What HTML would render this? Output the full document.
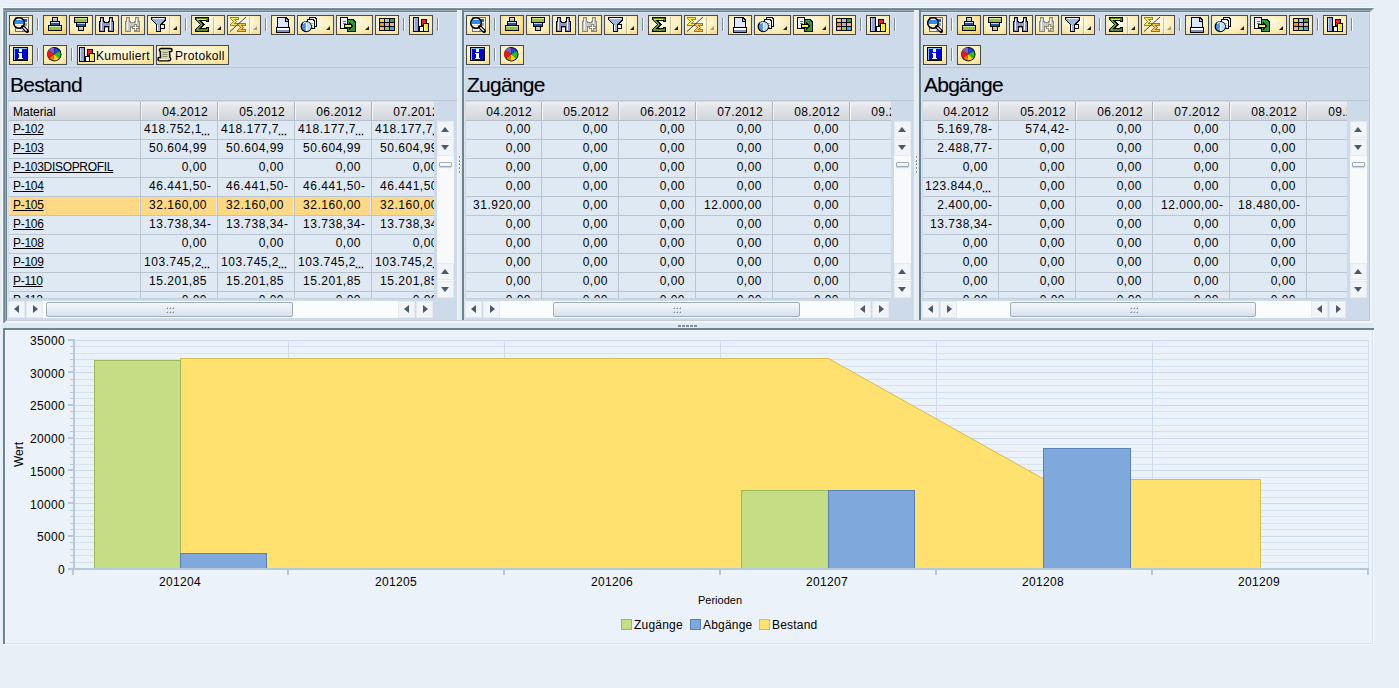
<!DOCTYPE html><html><head><meta charset="utf-8"><style>html,body{margin:0;padding:0}body{width:1399px;height:688px;position:relative;overflow:hidden;background:#e8eff7;font-family:"Liberation Sans",sans-serif}div{box-sizing:border-box}</style></head><body>
<div style="position:absolute;left:2px;top:7px;width:1372px;height:1px;background:#f6f9fc"></div>
<div style="position:absolute;left:2px;top:7px;width:1px;height:317px;background:#f6f9fc"></div>
<div style="position:absolute;left:1369px;top:8px;width:5px;height:314px;background:#e6edf3"></div>
<div style="position:absolute;left:3px;top:8px;width:1371px;height:316px;background:#6c8492;clip-path:polygon(0 0,1371px 0,1367px 4px,4px 4px,4px 312px,0 316px)"></div>
<div style="position:absolute;left:3px;top:10px;width:1368px;height:1px;background:#97a9b5"></div>
<div style="position:absolute;left:3px;top:8px;width:1370px;height:1px;background:#7c909d"></div>
<div style="position:absolute;left:5px;top:10px;width:1px;height:311px;background:#97a9b5"></div>
<div style="position:absolute;left:3px;top:9px;width:1px;height:314px;background:#8d9faa"></div>
<div style="position:absolute;left:7px;top:12px;width:450px;height:309px;background:#cddaea"></div>
<div style="position:absolute;left:7px;top:12px;width:450px;height:1px;background:#dce6f0"></div>
<div style="position:absolute;left:7px;top:12px;width:1px;height:309px;background:#d8e3ee"></div>
<div style="position:absolute;left:464px;top:12px;width:450px;height:309px;background:#cddaea"></div>
<div style="position:absolute;left:464px;top:12px;width:450px;height:1px;background:#dce6f0"></div>
<div style="position:absolute;left:464px;top:12px;width:1px;height:309px;background:#d8e3ee"></div>
<div style="position:absolute;left:921px;top:12px;width:448px;height:309px;background:#cddaea"></div>
<div style="position:absolute;left:921px;top:12px;width:448px;height:1px;background:#dce6f0"></div>
<div style="position:absolute;left:921px;top:12px;width:1px;height:309px;background:#d8e3ee"></div>
<div style="position:absolute;left:457px;top:10px;width:5px;height:312px;background:linear-gradient(90deg,#eef2f6,#dfe7ee)"></div>
<div style="position:absolute;left:462px;top:10px;width:2px;height:312px;background:#6c8492"></div>
<div style="position:absolute;left:459px;top:156px;width:1px;height:2px;background:#7d8d9c;box-shadow:1px 0 0 #fff,0 1px 0 #fff"></div>
<div style="position:absolute;left:459px;top:160px;width:1px;height:2px;background:#7d8d9c;box-shadow:1px 0 0 #fff,0 1px 0 #fff"></div>
<div style="position:absolute;left:459px;top:163px;width:1px;height:2px;background:#7d8d9c;box-shadow:1px 0 0 #fff,0 1px 0 #fff"></div>
<div style="position:absolute;left:459px;top:167px;width:1px;height:2px;background:#7d8d9c;box-shadow:1px 0 0 #fff,0 1px 0 #fff"></div>
<div style="position:absolute;left:459px;top:171px;width:1px;height:2px;background:#7d8d9c;box-shadow:1px 0 0 #fff,0 1px 0 #fff"></div>
<div style="position:absolute;left:914px;top:10px;width:5px;height:312px;background:linear-gradient(90deg,#eef2f6,#dfe7ee)"></div>
<div style="position:absolute;left:919px;top:10px;width:2px;height:312px;background:#6c8492"></div>
<div style="position:absolute;left:916px;top:156px;width:1px;height:2px;background:#7d8d9c;box-shadow:1px 0 0 #fff,0 1px 0 #fff"></div>
<div style="position:absolute;left:916px;top:160px;width:1px;height:2px;background:#7d8d9c;box-shadow:1px 0 0 #fff,0 1px 0 #fff"></div>
<div style="position:absolute;left:916px;top:163px;width:1px;height:2px;background:#7d8d9c;box-shadow:1px 0 0 #fff,0 1px 0 #fff"></div>
<div style="position:absolute;left:916px;top:167px;width:1px;height:2px;background:#7d8d9c;box-shadow:1px 0 0 #fff,0 1px 0 #fff"></div>
<div style="position:absolute;left:916px;top:171px;width:1px;height:2px;background:#7d8d9c;box-shadow:1px 0 0 #fff,0 1px 0 #fff"></div>
<div style="position:absolute;left:1369px;top:12px;width:1px;height:310px;background:#bcc8d3"></div>
<div style="position:absolute;left:1370px;top:12px;width:2px;height:310px;background:#eef3f7"></div>
<div style="position:absolute;left:7px;top:320px;width:1362px;height:1px;background:#c2cdd8"></div>
<div style="position:absolute;left:7px;top:321px;width:1365px;height:2px;background:#f2f6f9"></div>
<div style="position:absolute;left:2px;top:323px;width:1371px;height:5px;background:#e2eaf1"></div>
<div style="position:absolute;left:678px;top:325px;width:19px;height:2px;background:repeating-linear-gradient(90deg,#7f8f9f 0 3px,transparent 3px 4px)"></div>
<div style="position:absolute;left:3px;top:328px;width:1370px;height:316px;background:#ecf2f9"></div>
<div style="position:absolute;left:3px;top:328px;width:1371px;height:2px;background:#6c8492"></div>
<div style="position:absolute;left:3px;top:328px;width:2px;height:316px;background:#6c8492"></div>
<div style="position:absolute;left:5px;top:330px;width:1px;height:313px;background:#f6f9fc"></div>
<div style="position:absolute;left:5px;top:643px;width:1368px;height:1px;background:#d8e2ea"></div>
<div style="position:absolute;left:3px;top:644px;width:1371px;height:1px;background:#f4f7fa"></div>
<div style="position:absolute;left:1372px;top:330px;width:1px;height:314px;background:#d8e2ea"></div>
<div style="position:absolute;left:1373px;top:330px;width:1px;height:315px;background:#f4f7fa"></div>
<div style="position:absolute;left:9px;top:15px;width:24px;height:20px;box-sizing:border-box;border:1px solid #4a4a4a;border-radius:0;background:radial-gradient(ellipse 75% 70% at 45% 35%,#fffcec 0%,#fdf2c8 50%,#fce9aa 85%,#f9df90 100%)"><div style="position:absolute;left:3px;top:1px;width:17px;height:16px"><svg width="17" height="16" viewBox="0 0 17 16" style="position:absolute;left:0;top:0;overflow:visible" shape-rendering="crispEdges"><rect x="2" y="0" width="14" height="15" fill="#6e6e6e"/><rect x="3" y="1" width="12" height="13" fill="#f4f0e0"/><rect x="11" y="2" width="3" height="3" fill="#1f5fc0"/><rect x="11" y="6" width="3" height="3" fill="#8aa4c4"/><rect x="9" y="13" width="6" height="1" fill="#9a9ad8"/><g shape-rendering="auto"><circle cx="6" cy="6" r="5.3" fill="#fff8e0" stroke="#000" stroke-width="1.2"/><path d="M1.6 3 H10.6 V7 H1.6 Z" fill="#2a8cf2"/><path d="M2.5 8.5 H9.5" stroke="#f0d0f0" stroke-width="1"/><path d="M9.8 9.8 L14.2 14.2" stroke="#000" stroke-width="3.6" stroke-linecap="round"/><path d="M10.2 10.2 L13.8 13.8" stroke="#e8eef8" stroke-width="1.4"/></g><circle cx="6" cy="6" r="5.3" fill="none" stroke="#000" stroke-width="1.2" shape-rendering="auto"/></svg></div></div>
<div style="position:absolute;left:37px;top:18px;width:2px;height:13px;background:#ffffff;border-left:1px solid #7c8894;box-sizing:border-box"></div>
<div style="position:absolute;left:43px;top:15px;width:24px;height:20px;box-sizing:border-box;border:1px solid #4a4a4a;border-radius:0;background:radial-gradient(ellipse 75% 70% at 45% 35%,#fffae0 0%,#fde9a8 50%,#fcdb80 85%,#f9d068 100%)"><div style="position:absolute;left:3px;top:1px;width:17px;height:16px"><svg width="17" height="16" viewBox="0 0 17 16" style="position:absolute;left:0;top:0;overflow:visible" shape-rendering="crispEdges"><rect x="1" y="8" width="14" height="6" fill="#000"/><rect x="2" y="9" width="12" height="4" fill="#98c048"/><rect x="2" y="9" width="12" height="1" fill="#d4ec98"/><rect x="3" y="4" width="10" height="5" fill="#000"/><rect x="4" y="5" width="8" height="3" fill="#1a58a8"/><rect x="4" y="5" width="8" height="1" fill="#d0e0f4"/><rect x="5" y="0" width="6" height="5" fill="#000"/><rect x="6" y="1" width="4" height="3" fill="#c4c494"/><rect x="6" y="1" width="4" height="1" fill="#e0e0b8"/></svg></div></div>
<div style="position:absolute;left:69px;top:15px;width:24px;height:20px;box-sizing:border-box;border:1px solid #4a4a4a;border-radius:0;background:radial-gradient(ellipse 75% 70% at 45% 35%,#fffcec 0%,#fdf2c8 50%,#fce9aa 85%,#f9df90 100%)"><div style="position:absolute;left:3px;top:1px;width:17px;height:16px"><svg width="17" height="16" viewBox="0 0 17 16" style="position:absolute;left:0;top:0;overflow:visible" shape-rendering="crispEdges"><rect x="5" y="9" width="6" height="5" fill="#000"/><rect x="6" y="10" width="4" height="3" fill="#c4c494"/><rect x="6" y="10" width="4" height="1" fill="#e0e0b8"/><rect x="3" y="5" width="10" height="5" fill="#000"/><rect x="4" y="6" width="8" height="3" fill="#1a58a8"/><rect x="4" y="6" width="8" height="1" fill="#f4c0c0"/><rect x="1" y="0" width="14" height="6" fill="#000"/><rect x="2" y="1" width="12" height="4" fill="#98c048"/><rect x="2" y="1" width="12" height="1" fill="#d4ec98"/></svg></div></div>
<div style="position:absolute;left:95px;top:15px;width:24px;height:20px;box-sizing:border-box;border:1px solid #4a4a4a;border-radius:0;background:radial-gradient(ellipse 75% 70% at 45% 35%,#fffcec 0%,#fdf2c8 50%,#fce9aa 85%,#f9df90 100%)"><div style="position:absolute;left:3px;top:1px;width:17px;height:16px"><svg width="17" height="16" viewBox="0 0 17 16" style="position:absolute;left:0;top:0;overflow:visible" shape-rendering="crispEdges"><path d="M1 0 H5 V4 H6 V5 H9 V4 H10 V0 H14 V4 H15 V15 H9 V11 H6 V15 H0 V4 H1 Z" fill="#000"/><path d="M2 1 H4 V5 H5 V6 H10 V5 H11 V1 H13 V5 H14 V14 H10 V9 H5 V14 H1 V5 H2 Z" fill="#8c94d4"/><rect x="2" y="2" width="1" height="11" fill="#f4f4ff"/><rect x="11" y="2" width="1" height="11" fill="#f4f4ff"/><rect x="6" y="10" width="3" height="1" fill="#8c94d4"/></svg></div></div>
<div style="position:absolute;left:121px;top:15px;width:24px;height:20px;box-sizing:border-box;border:1px solid #4a4a4a;border-radius:0;background:radial-gradient(ellipse 75% 70% at 45% 35%,#fffcec 0%,#fdf2c8 50%,#fce9aa 85%,#f9df90 100%)"><div style="position:absolute;left:3px;top:1px;width:17px;height:16px"><svg width="17" height="16" viewBox="0 0 17 16" style="position:absolute;left:0;top:0;overflow:visible" shape-rendering="crispEdges"><path d="M1 0 H5 V4 H6 V5 H9 V4 H10 V0 H14 V4 H15 V15 H9 V11 H6 V15 H0 V4 H1 Z" fill="#8c8a78"/><path d="M2 1 H4 V5 H5 V6 H10 V5 H11 V1 H13 V5 H14 V14 H10 V9 H5 V14 H1 V5 H2 Z" fill="#c8c8c8"/><rect x="2" y="2" width="1" height="11" fill="#f4f4f4"/><rect x="11" y="2" width="1" height="11" fill="#f4f4f4"/><rect x="6" y="10" width="3" height="1" fill="#c8c8c8"/><path d="M9 7 H12 V9 H14 V12 H12 V14 H9 V12 H7 V9 H9 Z" fill="#8c8a78"/><path d="M10 8 H11 V10 H13 V11 H11 V13 H10 V11 H8 V10 H10 Z" fill="#fffef0"/></svg></div></div>
<div style="position:absolute;left:147px;top:15px;width:34px;height:20px;box-sizing:border-box;border:1px solid #4a4a4a;border-radius:0;background:radial-gradient(ellipse 75% 70% at 45% 35%,#fffcec 0%,#fdf2c8 50%,#fce9aa 85%,#f9df90 100%)"><div style="position:absolute;left:3px;top:1px;width:17px;height:16px"><svg width="17" height="16" viewBox="0 0 17 16" style="position:absolute;left:0;top:0;overflow:visible" shape-rendering="crispEdges"><path d="M0 0 H15 V3 L10 8 V15 H5 V8 L0 3 Z" fill="#000"/><path d="M1 1 H14 V2.6 L9 7.6 V14 H6 V7.6 L1 2.6 Z" fill="#9cb6dc"/><path d="M2 1.5 H13 M6.5 8 V13.5" stroke="#f4f8ff" stroke-width="1"/><rect x="9" y="7" width="5" height="5" fill="#000"/><rect x="10" y="8" width="3" height="3" fill="#fff6c8"/></svg></div><div style="position:absolute;left:21px;top:1px;width:1px;height:17px;background:#cfc296;box-shadow:1px 0 0 #fffbea"></div><div style="position:absolute;left:25px;top:10px;width:0;height:0;border-left:4px solid transparent;border-bottom:4px solid #1a1a30"></div></div>
<div style="position:absolute;left:185px;top:18px;width:2px;height:13px;background:#ffffff;border-left:1px solid #7c8894;box-sizing:border-box"></div>
<div style="position:absolute;left:191px;top:15px;width:34px;height:20px;box-sizing:border-box;border:1px solid #4a4a4a;border-radius:0;background:radial-gradient(ellipse 75% 70% at 45% 35%,#fffcec 0%,#fdf2c8 50%,#fce9aa 85%,#f9df90 100%)"><div style="position:absolute;left:3px;top:1px;width:17px;height:16px"><svg width="17" height="16" viewBox="0 0 17 16" style="position:absolute;left:0;top:0;overflow:visible" shape-rendering="crispEdges"><path d="M0 0 H14 V5 H11 V4 H6 L9.5 7.5 L6 11 H11 V10 H14 V15 H0 V12 L4.5 7.5 L0 3 Z" fill="#000"/><path d="M1.2 1.2 H12.8 V3.8 H11.8 V2.8 H3.2 L7.8 7.5 L3.2 12.2 H11.8 V11.2 H12.8 V13.8 H1.2 V12.4 L6 7.5 L1.2 2.6 Z" fill="#7cbc1c" shape-rendering="auto"/><path d="M2 2 H11" stroke="#c8f080" stroke-width="1"/></svg></div><div style="position:absolute;left:21px;top:1px;width:1px;height:17px;background:#cfc296;box-shadow:1px 0 0 #fffbea"></div><div style="position:absolute;left:25px;top:10px;width:0;height:0;border-left:4px solid transparent;border-bottom:4px solid #1a1a30"></div></div>
<div style="position:absolute;left:227px;top:15px;width:34px;height:20px;box-sizing:border-box;border:1px solid #4a4a4a;border-radius:0;background:radial-gradient(ellipse 75% 70% at 45% 35%,#fffcec 0%,#fdf2c8 50%,#fce9aa 85%,#f9df90 100%)"><div style="position:absolute;left:3px;top:1px;width:17px;height:16px"><svg width="17" height="16" viewBox="0 0 17 16" style="position:absolute;left:0;top:0;overflow:visible" shape-rendering="crispEdges"><g transform="translate(-1,0)"><path d="M0 0 H9 V3 H5 L7 4.5 L5 6 H9 V9 H0 V7 L2.5 4.5 L0 2 Z" fill="#8c8450"/><path d="M1 1 H8 V2 H3 L5.5 4.5 L3 7 H8 V8 H1 V7.4 L3.6 4.5 L1 1.6 Z" fill="#f4ec48"/><rect x="1" y="1" width="4" height="1" fill="#f4ec48"/><rect x="1" y="7" width="4" height="1" fill="#f4ec48"/></g><g transform="translate(6,6)"><path d="M0 0 H9 V3 H5 L7 4.5 L5 6 H9 V9 H0 V7 L2.5 4.5 L0 2 Z" fill="#8c7450"/><path d="M1 1 H8 V2 H3 L5.5 4.5 L3 7 H8 V8 H1 V7.4 L3.6 4.5 L1 1.6 Z" fill="#f6c050"/><rect x="1" y="1" width="4" height="1" fill="#f6c050"/><rect x="1" y="7" width="4" height="1" fill="#f6c050"/></g><path d="M-1 14.5 L15 0" stroke="#404040" stroke-width="1" shape-rendering="auto"/></svg></div><div style="position:absolute;left:21px;top:1px;width:1px;height:17px;background:#cfc296;box-shadow:1px 0 0 #fffbea"></div><div style="position:absolute;left:25px;top:10px;width:0;height:0;border-left:4px solid transparent;border-bottom:4px solid #9a9a9a"></div></div>
<div style="position:absolute;left:265px;top:18px;width:2px;height:13px;background:#ffffff;border-left:1px solid #7c8894;box-sizing:border-box"></div>
<div style="position:absolute;left:271px;top:15px;width:24px;height:20px;box-sizing:border-box;border:1px solid #4a4a4a;border-radius:0;background:radial-gradient(ellipse 75% 70% at 45% 35%,#fffcec 0%,#fdf2c8 50%,#fce9aa 85%,#f9df90 100%)"><div style="position:absolute;left:3px;top:1px;width:17px;height:16px"><svg width="17" height="16" viewBox="0 0 17 16" style="position:absolute;left:0;top:0;overflow:visible" shape-rendering="crispEdges"><path d="M2 0 H11 L14 3 V11 H2 Z" fill="#000"/><path d="M3 1 H10 L13 4 V10 H3 Z" fill="#dce8f8"/><path d="M10 1 V4 H13" fill="#a8c8e8" stroke="#000" stroke-width="1"/><rect x="1" y="10" width="14" height="6" fill="#000"/><rect x="2" y="11" width="12" height="2" fill="#ffffff"/><rect x="2" y="13" width="12" height="2" fill="#8090b8"/></svg></div></div>
<div style="position:absolute;left:297px;top:15px;width:37px;height:20px;box-sizing:border-box;border:1px solid #4a4a4a;border-radius:0;background:radial-gradient(ellipse 75% 70% at 45% 35%,#fffcec 0%,#fdf2c8 50%,#fce9aa 85%,#f9df90 100%)"><div style="position:absolute;left:3px;top:1px;width:17px;height:16px"><svg width="17" height="16" viewBox="0 0 17 16" style="position:absolute;left:0;top:0;overflow:visible" shape-rendering="crispEdges"><path d="M8 0 H14 L16 2 V10 H8 Z" fill="#000"/><path d="M9 1 H13 L15 3 V9 H9 Z" fill="#f4f4f8"/><path d="M6 2 H12 L14 4 V12 H6 Z" fill="#000"/><path d="M7 3 H11 L13 5 V11 H7 Z" fill="#fff"/><path d="M8 6 H12 M8 8 H12 M8 10 H12" stroke="#90a0b8" stroke-width="1"/><g shape-rendering="auto"><circle cx="5.2" cy="9.6" r="5" fill="#4a90ee" stroke="#000" stroke-width="1.3"/><path d="M5.5 5 A4.6 4.6 0 0 1 5.5 14.2 Z" fill="#b8dcfa"/><path d="M2 7 A4 4 0 0 1 5 5.2" stroke="#c0e0ff" stroke-width="1.2" fill="none"/><path d="M5.5 5.5 V14" stroke="#fff" stroke-width="1.2"/></g></svg></div><div style="position:absolute;left:28px;top:10px;width:0;height:0;border-left:4px solid transparent;border-bottom:4px solid #1a1a30"></div></div>
<div style="position:absolute;left:336px;top:15px;width:37px;height:20px;box-sizing:border-box;border:1px solid #4a4a4a;border-radius:0;background:radial-gradient(ellipse 75% 70% at 45% 35%,#fffcec 0%,#fdf2c8 50%,#fce9aa 85%,#f9df90 100%)"><div style="position:absolute;left:3px;top:1px;width:17px;height:16px"><svg width="17" height="16" viewBox="0 0 17 16" style="position:absolute;left:0;top:0;overflow:visible" shape-rendering="crispEdges"><path d="M0 0 H8 V12 H0 Z" fill="#000"/><rect x="1" y="1" width="6" height="10" fill="#e8f0fc"/><path d="M3 4 H6 M3 6 H6" stroke="#5878a8" stroke-width="1"/><path d="M7 2 H13 L16 5 V15 H7 Z" fill="#000"/><path d="M8 3 H12 L15 6 V14 H8 Z" fill="#2c9a2c"/><path d="M4 7 H9 V5 L13 9 L9 13 V11 H4 Z" fill="#000"/><path d="M5 8 H10 V7 L11.8 9 L10 11 V10 H5 Z" fill="#fff020"/></svg></div><div style="position:absolute;left:28px;top:10px;width:0;height:0;border-left:4px solid transparent;border-bottom:4px solid #1a1a30"></div></div>
<div style="position:absolute;left:375px;top:15px;width:24px;height:20px;box-sizing:border-box;border:1px solid #4a4a4a;border-radius:0;background:radial-gradient(ellipse 75% 70% at 45% 35%,#fffcec 0%,#fdf2c8 50%,#fce9aa 85%,#f9df90 100%)"><div style="position:absolute;left:3px;top:1px;width:17px;height:16px"><svg width="17" height="16" viewBox="0 0 17 16" style="position:absolute;left:0;top:0;overflow:visible" shape-rendering="crispEdges"><rect x="0" y="1" width="16" height="13" fill="#000"/><rect x="1" y="2" width="4" height="3" fill="#f4d820"/><rect x="6" y="2" width="4" height="3" fill="#a8c0f0"/><rect x="11" y="2" width="4" height="3" fill="#40a030"/><rect x="1" y="6" width="4" height="3" fill="#f89010"/><rect x="6" y="6" width="4" height="3" fill="#c0a0e0"/><rect x="11" y="6" width="4" height="3" fill="#e0b888"/><rect x="1" y="10" width="4" height="3" fill="#f8a8b0"/><rect x="6" y="10" width="4" height="3" fill="#98d030"/><rect x="11" y="10" width="4" height="3" fill="#40a8f8"/></svg></div></div>
<div style="position:absolute;left:403px;top:18px;width:2px;height:13px;background:#ffffff;border-left:1px solid #7c8894;box-sizing:border-box"></div>
<div style="position:absolute;left:409px;top:15px;width:24px;height:20px;box-sizing:border-box;border:1px solid #4a4a4a;border-radius:0;background:radial-gradient(ellipse 75% 70% at 45% 35%,#fffcec 0%,#fdf2c8 50%,#fce9aa 85%,#f9df90 100%)"><div style="position:absolute;left:3px;top:1px;width:17px;height:16px"><svg width="17" height="16" viewBox="0 0 17 16" style="position:absolute;left:0;top:0;overflow:visible" shape-rendering="crispEdges"><g transform="translate(0,0)"><rect x="0" y="0" width="6" height="15" fill="#000"/><rect x="1" y="1" width="4" height="13" fill="#8ea4dc"/><rect x="1" y="1" width="1" height="13" fill="#c8d8f8"/><rect x="8" y="2" width="6" height="7" fill="#000"/><rect x="9" y="3" width="4" height="5" fill="#f02020"/><rect x="6" y="9" width="5" height="6" fill="#000"/><rect x="7" y="10" width="3" height="4" fill="#f8fcff"/><rect x="10" y="6" width="6" height="9" fill="#000"/><rect x="11" y="7" width="4" height="7" fill="#f8ec00"/><rect x="11" y="7" width="1" height="7" fill="#ffffa0"/></g></svg></div></div>
<div style="position:absolute;left:437px;top:18px;width:2px;height:13px;background:#ffffff;border-left:1px solid #7c8894;box-sizing:border-box"></div>
<div style="position:absolute;left:9px;top:45px;width:24px;height:20px;box-sizing:border-box;border:1px solid #4a4a4a;border-radius:0;background:radial-gradient(ellipse 75% 70% at 45% 35%,#fffcec 0%,#fdf2c8 50%,#fce9aa 85%,#f9df90 100%)"><div style="position:absolute;left:3px;top:1px;width:17px;height:16px"><svg width="17" height="16" viewBox="0 0 17 16" style="position:absolute;left:0;top:0;overflow:visible" shape-rendering="crispEdges"><rect x="0" y="0" width="15" height="14" fill="#000"/><rect x="1" y="1" width="13" height="12" fill="#0008d8"/><rect x="1" y="1" width="13" height="1" fill="#80c0ff"/><rect x="1" y="1" width="1" height="12" fill="#80c0ff"/><rect x="6" y="2" width="3" height="3" fill="#fff"/><path d="M5 6 H9 V11 H10 V12 H5 V11 H6 V7 H5 Z" fill="#fff"/></svg></div></div>
<div style="position:absolute;left:37px;top:48px;width:2px;height:13px;background:#ffffff;border-left:1px solid #7c8894;box-sizing:border-box"></div>
<div style="position:absolute;left:43px;top:45px;width:24px;height:20px;box-sizing:border-box;border:1px solid #4a4a4a;border-radius:0;background:radial-gradient(ellipse 75% 70% at 45% 35%,#fffcec 0%,#fdf2c8 50%,#fce9aa 85%,#f9df90 100%)"><div style="position:absolute;left:3px;top:1px;width:17px;height:16px"><svg width="17" height="16" viewBox="0 0 17 16" style="position:absolute;left:0;top:0;overflow:visible" shape-rendering="crispEdges"><g shape-rendering="auto"><circle cx="7.3" cy="7.2" r="7.2" fill="#000"/><path d="M7.3 7.2 L1.3 3.2 A6.2 6.2 0 0 1 7.3 1 Z" fill="#8060c0"/><path d="M7.3 7.2 L7.3 1 A6.2 6.2 0 0 1 12.6 4 Z" fill="#2040f0"/><path d="M7.3 7.2 L12.6 4 A6.2 6.2 0 0 1 12 11.4 Z" fill="#20c020"/><path d="M7.3 7.2 L12 11.4 A6.2 6.2 0 0 1 6 13.3 Z" fill="#f8d800"/><path d="M7.3 7.2 L6 13.3 A6.2 6.2 0 0 1 2 11 Z" fill="#f07010"/><path d="M7.3 7.2 L2 11 A6.2 6.2 0 0 1 1.3 3.2 Z" fill="#e81818"/></g></svg></div></div>
<div style="position:absolute;left:71px;top:48px;width:2px;height:13px;background:#ffffff;border-left:1px solid #7c8894;box-sizing:border-box"></div>
<div style="position:absolute;left:77px;top:45px;width:77px;height:20px;box-sizing:border-box;border:1px solid #4a4a4a;border-radius:0;background:radial-gradient(ellipse 75% 70% at 45% 35%,#fffcec 0%,#fdf2c8 50%,#fce9aa 85%,#f9df90 100%)"><div style="position:absolute;left:1px;top:1px;width:17px;height:16px"><svg width="17" height="16" viewBox="0 0 17 16" style="position:absolute;left:0;top:0;overflow:visible" shape-rendering="crispEdges"><g transform="translate(0,0)"><rect x="0" y="0" width="6" height="15" fill="#000"/><rect x="1" y="1" width="4" height="13" fill="#8ea4dc"/><rect x="1" y="1" width="1" height="13" fill="#c8d8f8"/><rect x="8" y="2" width="6" height="7" fill="#000"/><rect x="9" y="3" width="4" height="5" fill="#f02020"/><rect x="6" y="9" width="5" height="6" fill="#000"/><rect x="7" y="10" width="3" height="4" fill="#f8fcff"/><rect x="10" y="6" width="6" height="9" fill="#000"/><rect x="11" y="7" width="4" height="7" fill="#f8ec00"/><rect x="11" y="7" width="1" height="7" fill="#ffffa0"/></g></svg></div><div style="position:absolute;left:18px;top:2px;font:12px 'Liberation Sans', sans-serif;line-height:16px;letter-spacing:0.35px;color:#000;white-space:nowrap">Kumuliert</div></div>
<div style="position:absolute;left:156px;top:45px;width:73px;height:20px;box-sizing:border-box;border:1px solid #4a4a4a;border-radius:0;background:radial-gradient(ellipse 75% 70% at 45% 35%,#fffcec 0%,#fdf2c8 50%,#fce9aa 85%,#f9df90 100%)"><div style="position:absolute;left:1px;top:1px;width:17px;height:16px"><svg width="17" height="16" viewBox="0 0 17 16" style="position:absolute;left:0;top:0;overflow:visible" shape-rendering="crispEdges"><g shape-rendering="auto"><path d="M3 1.5 H12.5 A1.6 1.6 0 0 1 12.5 4.7 H11.5 L12 10.5 A1.8 1.8 0 0 1 10.5 13.7 H1.5 A1.6 1.6 0 0 1 1.5 10.5 H2.5 L2.2 4.5 A1.6 1.6 0 0 1 3 1.5 Z" fill="#d4d6b0" stroke="#000" stroke-width="1.4"/><path d="M4.5 5.5 H9.5 M4.5 7.5 H9.5 M4.5 9.5 H9.5" stroke="#8c8c60" stroke-width="1"/><path d="M1 12.8 H10" stroke="#fff" stroke-width="0.8"/></g></svg></div><div style="position:absolute;left:18px;top:2px;font:12px 'Liberation Sans', sans-serif;line-height:16px;letter-spacing:0.35px;color:#000;white-space:nowrap">Protokoll</div></div>
<div style="position:absolute;left:8px;top:65px;width:449px;height:1px;background:#d3e1ee"></div>
<div style="position:absolute;left:8px;top:67px;width:449px;height:1px;background:#b9c5d0"></div>
<div style="position:absolute;left:10px;top:73px;font:21px 'Liberation Sans', sans-serif;letter-spacing:-0.75px;-webkit-text-stroke:0.12px #000;color:#000;white-space:nowrap">Bestand</div>
<div style="position:absolute;left:8px;top:100px;width:449px;height:1px;background:#b9c5d0"></div>
<div style="position:absolute;left:466px;top:15px;width:24px;height:20px;box-sizing:border-box;border:1px solid #4a4a4a;border-radius:0;background:radial-gradient(ellipse 75% 70% at 45% 35%,#fffcec 0%,#fdf2c8 50%,#fce9aa 85%,#f9df90 100%)"><div style="position:absolute;left:3px;top:1px;width:17px;height:16px"><svg width="17" height="16" viewBox="0 0 17 16" style="position:absolute;left:0;top:0;overflow:visible" shape-rendering="crispEdges"><rect x="2" y="0" width="14" height="15" fill="#6e6e6e"/><rect x="3" y="1" width="12" height="13" fill="#f4f0e0"/><rect x="11" y="2" width="3" height="3" fill="#1f5fc0"/><rect x="11" y="6" width="3" height="3" fill="#8aa4c4"/><rect x="9" y="13" width="6" height="1" fill="#9a9ad8"/><g shape-rendering="auto"><circle cx="6" cy="6" r="5.3" fill="#fff8e0" stroke="#000" stroke-width="1.2"/><path d="M1.6 3 H10.6 V7 H1.6 Z" fill="#2a8cf2"/><path d="M2.5 8.5 H9.5" stroke="#f0d0f0" stroke-width="1"/><path d="M9.8 9.8 L14.2 14.2" stroke="#000" stroke-width="3.6" stroke-linecap="round"/><path d="M10.2 10.2 L13.8 13.8" stroke="#e8eef8" stroke-width="1.4"/></g><circle cx="6" cy="6" r="5.3" fill="none" stroke="#000" stroke-width="1.2" shape-rendering="auto"/></svg></div></div>
<div style="position:absolute;left:494px;top:18px;width:2px;height:13px;background:#ffffff;border-left:1px solid #7c8894;box-sizing:border-box"></div>
<div style="position:absolute;left:500px;top:15px;width:24px;height:20px;box-sizing:border-box;border:1px solid #4a4a4a;border-radius:0;background:radial-gradient(ellipse 75% 70% at 45% 35%,#fffae0 0%,#fde9a8 50%,#fcdb80 85%,#f9d068 100%)"><div style="position:absolute;left:3px;top:1px;width:17px;height:16px"><svg width="17" height="16" viewBox="0 0 17 16" style="position:absolute;left:0;top:0;overflow:visible" shape-rendering="crispEdges"><rect x="1" y="8" width="14" height="6" fill="#000"/><rect x="2" y="9" width="12" height="4" fill="#98c048"/><rect x="2" y="9" width="12" height="1" fill="#d4ec98"/><rect x="3" y="4" width="10" height="5" fill="#000"/><rect x="4" y="5" width="8" height="3" fill="#1a58a8"/><rect x="4" y="5" width="8" height="1" fill="#d0e0f4"/><rect x="5" y="0" width="6" height="5" fill="#000"/><rect x="6" y="1" width="4" height="3" fill="#c4c494"/><rect x="6" y="1" width="4" height="1" fill="#e0e0b8"/></svg></div></div>
<div style="position:absolute;left:526px;top:15px;width:24px;height:20px;box-sizing:border-box;border:1px solid #4a4a4a;border-radius:0;background:radial-gradient(ellipse 75% 70% at 45% 35%,#fffcec 0%,#fdf2c8 50%,#fce9aa 85%,#f9df90 100%)"><div style="position:absolute;left:3px;top:1px;width:17px;height:16px"><svg width="17" height="16" viewBox="0 0 17 16" style="position:absolute;left:0;top:0;overflow:visible" shape-rendering="crispEdges"><rect x="5" y="9" width="6" height="5" fill="#000"/><rect x="6" y="10" width="4" height="3" fill="#c4c494"/><rect x="6" y="10" width="4" height="1" fill="#e0e0b8"/><rect x="3" y="5" width="10" height="5" fill="#000"/><rect x="4" y="6" width="8" height="3" fill="#1a58a8"/><rect x="4" y="6" width="8" height="1" fill="#f4c0c0"/><rect x="1" y="0" width="14" height="6" fill="#000"/><rect x="2" y="1" width="12" height="4" fill="#98c048"/><rect x="2" y="1" width="12" height="1" fill="#d4ec98"/></svg></div></div>
<div style="position:absolute;left:552px;top:15px;width:24px;height:20px;box-sizing:border-box;border:1px solid #4a4a4a;border-radius:0;background:radial-gradient(ellipse 75% 70% at 45% 35%,#fffcec 0%,#fdf2c8 50%,#fce9aa 85%,#f9df90 100%)"><div style="position:absolute;left:3px;top:1px;width:17px;height:16px"><svg width="17" height="16" viewBox="0 0 17 16" style="position:absolute;left:0;top:0;overflow:visible" shape-rendering="crispEdges"><path d="M1 0 H5 V4 H6 V5 H9 V4 H10 V0 H14 V4 H15 V15 H9 V11 H6 V15 H0 V4 H1 Z" fill="#000"/><path d="M2 1 H4 V5 H5 V6 H10 V5 H11 V1 H13 V5 H14 V14 H10 V9 H5 V14 H1 V5 H2 Z" fill="#8c94d4"/><rect x="2" y="2" width="1" height="11" fill="#f4f4ff"/><rect x="11" y="2" width="1" height="11" fill="#f4f4ff"/><rect x="6" y="10" width="3" height="1" fill="#8c94d4"/></svg></div></div>
<div style="position:absolute;left:578px;top:15px;width:24px;height:20px;box-sizing:border-box;border:1px solid #4a4a4a;border-radius:0;background:radial-gradient(ellipse 75% 70% at 45% 35%,#fffcec 0%,#fdf2c8 50%,#fce9aa 85%,#f9df90 100%)"><div style="position:absolute;left:3px;top:1px;width:17px;height:16px"><svg width="17" height="16" viewBox="0 0 17 16" style="position:absolute;left:0;top:0;overflow:visible" shape-rendering="crispEdges"><path d="M1 0 H5 V4 H6 V5 H9 V4 H10 V0 H14 V4 H15 V15 H9 V11 H6 V15 H0 V4 H1 Z" fill="#8c8a78"/><path d="M2 1 H4 V5 H5 V6 H10 V5 H11 V1 H13 V5 H14 V14 H10 V9 H5 V14 H1 V5 H2 Z" fill="#c8c8c8"/><rect x="2" y="2" width="1" height="11" fill="#f4f4f4"/><rect x="11" y="2" width="1" height="11" fill="#f4f4f4"/><rect x="6" y="10" width="3" height="1" fill="#c8c8c8"/><path d="M9 7 H12 V9 H14 V12 H12 V14 H9 V12 H7 V9 H9 Z" fill="#8c8a78"/><path d="M10 8 H11 V10 H13 V11 H11 V13 H10 V11 H8 V10 H10 Z" fill="#fffef0"/></svg></div></div>
<div style="position:absolute;left:604px;top:15px;width:34px;height:20px;box-sizing:border-box;border:1px solid #4a4a4a;border-radius:0;background:radial-gradient(ellipse 75% 70% at 45% 35%,#fffcec 0%,#fdf2c8 50%,#fce9aa 85%,#f9df90 100%)"><div style="position:absolute;left:3px;top:1px;width:17px;height:16px"><svg width="17" height="16" viewBox="0 0 17 16" style="position:absolute;left:0;top:0;overflow:visible" shape-rendering="crispEdges"><path d="M0 0 H15 V3 L10 8 V15 H5 V8 L0 3 Z" fill="#000"/><path d="M1 1 H14 V2.6 L9 7.6 V14 H6 V7.6 L1 2.6 Z" fill="#9cb6dc"/><path d="M2 1.5 H13 M6.5 8 V13.5" stroke="#f4f8ff" stroke-width="1"/><rect x="9" y="7" width="5" height="5" fill="#000"/><rect x="10" y="8" width="3" height="3" fill="#fff6c8"/></svg></div><div style="position:absolute;left:21px;top:1px;width:1px;height:17px;background:#cfc296;box-shadow:1px 0 0 #fffbea"></div><div style="position:absolute;left:25px;top:10px;width:0;height:0;border-left:4px solid transparent;border-bottom:4px solid #1a1a30"></div></div>
<div style="position:absolute;left:642px;top:18px;width:2px;height:13px;background:#ffffff;border-left:1px solid #7c8894;box-sizing:border-box"></div>
<div style="position:absolute;left:648px;top:15px;width:34px;height:20px;box-sizing:border-box;border:1px solid #4a4a4a;border-radius:0;background:radial-gradient(ellipse 75% 70% at 45% 35%,#fffcec 0%,#fdf2c8 50%,#fce9aa 85%,#f9df90 100%)"><div style="position:absolute;left:3px;top:1px;width:17px;height:16px"><svg width="17" height="16" viewBox="0 0 17 16" style="position:absolute;left:0;top:0;overflow:visible" shape-rendering="crispEdges"><path d="M0 0 H14 V5 H11 V4 H6 L9.5 7.5 L6 11 H11 V10 H14 V15 H0 V12 L4.5 7.5 L0 3 Z" fill="#000"/><path d="M1.2 1.2 H12.8 V3.8 H11.8 V2.8 H3.2 L7.8 7.5 L3.2 12.2 H11.8 V11.2 H12.8 V13.8 H1.2 V12.4 L6 7.5 L1.2 2.6 Z" fill="#7cbc1c" shape-rendering="auto"/><path d="M2 2 H11" stroke="#c8f080" stroke-width="1"/></svg></div><div style="position:absolute;left:21px;top:1px;width:1px;height:17px;background:#cfc296;box-shadow:1px 0 0 #fffbea"></div><div style="position:absolute;left:25px;top:10px;width:0;height:0;border-left:4px solid transparent;border-bottom:4px solid #1a1a30"></div></div>
<div style="position:absolute;left:684px;top:15px;width:34px;height:20px;box-sizing:border-box;border:1px solid #4a4a4a;border-radius:0;background:radial-gradient(ellipse 75% 70% at 45% 35%,#fffcec 0%,#fdf2c8 50%,#fce9aa 85%,#f9df90 100%)"><div style="position:absolute;left:3px;top:1px;width:17px;height:16px"><svg width="17" height="16" viewBox="0 0 17 16" style="position:absolute;left:0;top:0;overflow:visible" shape-rendering="crispEdges"><g transform="translate(-1,0)"><path d="M0 0 H9 V3 H5 L7 4.5 L5 6 H9 V9 H0 V7 L2.5 4.5 L0 2 Z" fill="#8c8450"/><path d="M1 1 H8 V2 H3 L5.5 4.5 L3 7 H8 V8 H1 V7.4 L3.6 4.5 L1 1.6 Z" fill="#f4ec48"/><rect x="1" y="1" width="4" height="1" fill="#f4ec48"/><rect x="1" y="7" width="4" height="1" fill="#f4ec48"/></g><g transform="translate(6,6)"><path d="M0 0 H9 V3 H5 L7 4.5 L5 6 H9 V9 H0 V7 L2.5 4.5 L0 2 Z" fill="#8c7450"/><path d="M1 1 H8 V2 H3 L5.5 4.5 L3 7 H8 V8 H1 V7.4 L3.6 4.5 L1 1.6 Z" fill="#f6c050"/><rect x="1" y="1" width="4" height="1" fill="#f6c050"/><rect x="1" y="7" width="4" height="1" fill="#f6c050"/></g><path d="M-1 14.5 L15 0" stroke="#404040" stroke-width="1" shape-rendering="auto"/></svg></div><div style="position:absolute;left:21px;top:1px;width:1px;height:17px;background:#cfc296;box-shadow:1px 0 0 #fffbea"></div><div style="position:absolute;left:25px;top:10px;width:0;height:0;border-left:4px solid transparent;border-bottom:4px solid #9a9a9a"></div></div>
<div style="position:absolute;left:722px;top:18px;width:2px;height:13px;background:#ffffff;border-left:1px solid #7c8894;box-sizing:border-box"></div>
<div style="position:absolute;left:728px;top:15px;width:24px;height:20px;box-sizing:border-box;border:1px solid #4a4a4a;border-radius:0;background:radial-gradient(ellipse 75% 70% at 45% 35%,#fffcec 0%,#fdf2c8 50%,#fce9aa 85%,#f9df90 100%)"><div style="position:absolute;left:3px;top:1px;width:17px;height:16px"><svg width="17" height="16" viewBox="0 0 17 16" style="position:absolute;left:0;top:0;overflow:visible" shape-rendering="crispEdges"><path d="M2 0 H11 L14 3 V11 H2 Z" fill="#000"/><path d="M3 1 H10 L13 4 V10 H3 Z" fill="#dce8f8"/><path d="M10 1 V4 H13" fill="#a8c8e8" stroke="#000" stroke-width="1"/><rect x="1" y="10" width="14" height="6" fill="#000"/><rect x="2" y="11" width="12" height="2" fill="#ffffff"/><rect x="2" y="13" width="12" height="2" fill="#8090b8"/></svg></div></div>
<div style="position:absolute;left:754px;top:15px;width:37px;height:20px;box-sizing:border-box;border:1px solid #4a4a4a;border-radius:0;background:radial-gradient(ellipse 75% 70% at 45% 35%,#fffcec 0%,#fdf2c8 50%,#fce9aa 85%,#f9df90 100%)"><div style="position:absolute;left:3px;top:1px;width:17px;height:16px"><svg width="17" height="16" viewBox="0 0 17 16" style="position:absolute;left:0;top:0;overflow:visible" shape-rendering="crispEdges"><path d="M8 0 H14 L16 2 V10 H8 Z" fill="#000"/><path d="M9 1 H13 L15 3 V9 H9 Z" fill="#f4f4f8"/><path d="M6 2 H12 L14 4 V12 H6 Z" fill="#000"/><path d="M7 3 H11 L13 5 V11 H7 Z" fill="#fff"/><path d="M8 6 H12 M8 8 H12 M8 10 H12" stroke="#90a0b8" stroke-width="1"/><g shape-rendering="auto"><circle cx="5.2" cy="9.6" r="5" fill="#4a90ee" stroke="#000" stroke-width="1.3"/><path d="M5.5 5 A4.6 4.6 0 0 1 5.5 14.2 Z" fill="#b8dcfa"/><path d="M2 7 A4 4 0 0 1 5 5.2" stroke="#c0e0ff" stroke-width="1.2" fill="none"/><path d="M5.5 5.5 V14" stroke="#fff" stroke-width="1.2"/></g></svg></div><div style="position:absolute;left:28px;top:10px;width:0;height:0;border-left:4px solid transparent;border-bottom:4px solid #1a1a30"></div></div>
<div style="position:absolute;left:793px;top:15px;width:37px;height:20px;box-sizing:border-box;border:1px solid #4a4a4a;border-radius:0;background:radial-gradient(ellipse 75% 70% at 45% 35%,#fffcec 0%,#fdf2c8 50%,#fce9aa 85%,#f9df90 100%)"><div style="position:absolute;left:3px;top:1px;width:17px;height:16px"><svg width="17" height="16" viewBox="0 0 17 16" style="position:absolute;left:0;top:0;overflow:visible" shape-rendering="crispEdges"><path d="M0 0 H8 V12 H0 Z" fill="#000"/><rect x="1" y="1" width="6" height="10" fill="#e8f0fc"/><path d="M3 4 H6 M3 6 H6" stroke="#5878a8" stroke-width="1"/><path d="M7 2 H13 L16 5 V15 H7 Z" fill="#000"/><path d="M8 3 H12 L15 6 V14 H8 Z" fill="#2c9a2c"/><path d="M4 7 H9 V5 L13 9 L9 13 V11 H4 Z" fill="#000"/><path d="M5 8 H10 V7 L11.8 9 L10 11 V10 H5 Z" fill="#fff020"/></svg></div><div style="position:absolute;left:28px;top:10px;width:0;height:0;border-left:4px solid transparent;border-bottom:4px solid #1a1a30"></div></div>
<div style="position:absolute;left:832px;top:15px;width:24px;height:20px;box-sizing:border-box;border:1px solid #4a4a4a;border-radius:0;background:radial-gradient(ellipse 75% 70% at 45% 35%,#fffcec 0%,#fdf2c8 50%,#fce9aa 85%,#f9df90 100%)"><div style="position:absolute;left:3px;top:1px;width:17px;height:16px"><svg width="17" height="16" viewBox="0 0 17 16" style="position:absolute;left:0;top:0;overflow:visible" shape-rendering="crispEdges"><rect x="0" y="1" width="16" height="13" fill="#000"/><rect x="1" y="2" width="4" height="3" fill="#f4d820"/><rect x="6" y="2" width="4" height="3" fill="#a8c0f0"/><rect x="11" y="2" width="4" height="3" fill="#40a030"/><rect x="1" y="6" width="4" height="3" fill="#f89010"/><rect x="6" y="6" width="4" height="3" fill="#c0a0e0"/><rect x="11" y="6" width="4" height="3" fill="#e0b888"/><rect x="1" y="10" width="4" height="3" fill="#f8a8b0"/><rect x="6" y="10" width="4" height="3" fill="#98d030"/><rect x="11" y="10" width="4" height="3" fill="#40a8f8"/></svg></div></div>
<div style="position:absolute;left:860px;top:18px;width:2px;height:13px;background:#ffffff;border-left:1px solid #7c8894;box-sizing:border-box"></div>
<div style="position:absolute;left:866px;top:15px;width:24px;height:20px;box-sizing:border-box;border:1px solid #4a4a4a;border-radius:0;background:radial-gradient(ellipse 75% 70% at 45% 35%,#fffcec 0%,#fdf2c8 50%,#fce9aa 85%,#f9df90 100%)"><div style="position:absolute;left:3px;top:1px;width:17px;height:16px"><svg width="17" height="16" viewBox="0 0 17 16" style="position:absolute;left:0;top:0;overflow:visible" shape-rendering="crispEdges"><g transform="translate(0,0)"><rect x="0" y="0" width="6" height="15" fill="#000"/><rect x="1" y="1" width="4" height="13" fill="#8ea4dc"/><rect x="1" y="1" width="1" height="13" fill="#c8d8f8"/><rect x="8" y="2" width="6" height="7" fill="#000"/><rect x="9" y="3" width="4" height="5" fill="#f02020"/><rect x="6" y="9" width="5" height="6" fill="#000"/><rect x="7" y="10" width="3" height="4" fill="#f8fcff"/><rect x="10" y="6" width="6" height="9" fill="#000"/><rect x="11" y="7" width="4" height="7" fill="#f8ec00"/><rect x="11" y="7" width="1" height="7" fill="#ffffa0"/></g></svg></div></div>
<div style="position:absolute;left:894px;top:18px;width:2px;height:13px;background:#ffffff;border-left:1px solid #7c8894;box-sizing:border-box"></div>
<div style="position:absolute;left:466px;top:45px;width:24px;height:20px;box-sizing:border-box;border:1px solid #4a4a4a;border-radius:0;background:radial-gradient(ellipse 75% 70% at 45% 35%,#fffcec 0%,#fdf2c8 50%,#fce9aa 85%,#f9df90 100%)"><div style="position:absolute;left:3px;top:1px;width:17px;height:16px"><svg width="17" height="16" viewBox="0 0 17 16" style="position:absolute;left:0;top:0;overflow:visible" shape-rendering="crispEdges"><rect x="0" y="0" width="15" height="14" fill="#000"/><rect x="1" y="1" width="13" height="12" fill="#0008d8"/><rect x="1" y="1" width="13" height="1" fill="#80c0ff"/><rect x="1" y="1" width="1" height="12" fill="#80c0ff"/><rect x="6" y="2" width="3" height="3" fill="#fff"/><path d="M5 6 H9 V11 H10 V12 H5 V11 H6 V7 H5 Z" fill="#fff"/></svg></div></div>
<div style="position:absolute;left:494px;top:48px;width:2px;height:13px;background:#ffffff;border-left:1px solid #7c8894;box-sizing:border-box"></div>
<div style="position:absolute;left:500px;top:45px;width:24px;height:20px;box-sizing:border-box;border:1px solid #4a4a4a;border-radius:0;background:radial-gradient(ellipse 75% 70% at 45% 35%,#fffcec 0%,#fdf2c8 50%,#fce9aa 85%,#f9df90 100%)"><div style="position:absolute;left:3px;top:1px;width:17px;height:16px"><svg width="17" height="16" viewBox="0 0 17 16" style="position:absolute;left:0;top:0;overflow:visible" shape-rendering="crispEdges"><g shape-rendering="auto"><circle cx="7.3" cy="7.2" r="7.2" fill="#000"/><path d="M7.3 7.2 L1.3 3.2 A6.2 6.2 0 0 1 7.3 1 Z" fill="#8060c0"/><path d="M7.3 7.2 L7.3 1 A6.2 6.2 0 0 1 12.6 4 Z" fill="#2040f0"/><path d="M7.3 7.2 L12.6 4 A6.2 6.2 0 0 1 12 11.4 Z" fill="#20c020"/><path d="M7.3 7.2 L12 11.4 A6.2 6.2 0 0 1 6 13.3 Z" fill="#f8d800"/><path d="M7.3 7.2 L6 13.3 A6.2 6.2 0 0 1 2 11 Z" fill="#f07010"/><path d="M7.3 7.2 L2 11 A6.2 6.2 0 0 1 1.3 3.2 Z" fill="#e81818"/></g></svg></div></div>
<div style="position:absolute;left:465px;top:65px;width:449px;height:1px;background:#d3e1ee"></div>
<div style="position:absolute;left:465px;top:67px;width:449px;height:1px;background:#b9c5d0"></div>
<div style="position:absolute;left:467px;top:73px;font:21px 'Liberation Sans', sans-serif;letter-spacing:-0.75px;-webkit-text-stroke:0.12px #000;color:#000;white-space:nowrap">Zugänge</div>
<div style="position:absolute;left:465px;top:100px;width:449px;height:1px;background:#b9c5d0"></div>
<div style="position:absolute;left:923px;top:15px;width:24px;height:20px;box-sizing:border-box;border:1px solid #4a4a4a;border-radius:0;background:radial-gradient(ellipse 75% 70% at 45% 35%,#fffcec 0%,#fdf2c8 50%,#fce9aa 85%,#f9df90 100%)"><div style="position:absolute;left:3px;top:1px;width:17px;height:16px"><svg width="17" height="16" viewBox="0 0 17 16" style="position:absolute;left:0;top:0;overflow:visible" shape-rendering="crispEdges"><rect x="2" y="0" width="14" height="15" fill="#6e6e6e"/><rect x="3" y="1" width="12" height="13" fill="#f4f0e0"/><rect x="11" y="2" width="3" height="3" fill="#1f5fc0"/><rect x="11" y="6" width="3" height="3" fill="#8aa4c4"/><rect x="9" y="13" width="6" height="1" fill="#9a9ad8"/><g shape-rendering="auto"><circle cx="6" cy="6" r="5.3" fill="#fff8e0" stroke="#000" stroke-width="1.2"/><path d="M1.6 3 H10.6 V7 H1.6 Z" fill="#2a8cf2"/><path d="M2.5 8.5 H9.5" stroke="#f0d0f0" stroke-width="1"/><path d="M9.8 9.8 L14.2 14.2" stroke="#000" stroke-width="3.6" stroke-linecap="round"/><path d="M10.2 10.2 L13.8 13.8" stroke="#e8eef8" stroke-width="1.4"/></g><circle cx="6" cy="6" r="5.3" fill="none" stroke="#000" stroke-width="1.2" shape-rendering="auto"/></svg></div></div>
<div style="position:absolute;left:951px;top:18px;width:2px;height:13px;background:#ffffff;border-left:1px solid #7c8894;box-sizing:border-box"></div>
<div style="position:absolute;left:957px;top:15px;width:24px;height:20px;box-sizing:border-box;border:1px solid #4a4a4a;border-radius:0;background:radial-gradient(ellipse 75% 70% at 45% 35%,#fffae0 0%,#fde9a8 50%,#fcdb80 85%,#f9d068 100%)"><div style="position:absolute;left:3px;top:1px;width:17px;height:16px"><svg width="17" height="16" viewBox="0 0 17 16" style="position:absolute;left:0;top:0;overflow:visible" shape-rendering="crispEdges"><rect x="1" y="8" width="14" height="6" fill="#000"/><rect x="2" y="9" width="12" height="4" fill="#98c048"/><rect x="2" y="9" width="12" height="1" fill="#d4ec98"/><rect x="3" y="4" width="10" height="5" fill="#000"/><rect x="4" y="5" width="8" height="3" fill="#1a58a8"/><rect x="4" y="5" width="8" height="1" fill="#d0e0f4"/><rect x="5" y="0" width="6" height="5" fill="#000"/><rect x="6" y="1" width="4" height="3" fill="#c4c494"/><rect x="6" y="1" width="4" height="1" fill="#e0e0b8"/></svg></div></div>
<div style="position:absolute;left:983px;top:15px;width:24px;height:20px;box-sizing:border-box;border:1px solid #4a4a4a;border-radius:0;background:radial-gradient(ellipse 75% 70% at 45% 35%,#fffcec 0%,#fdf2c8 50%,#fce9aa 85%,#f9df90 100%)"><div style="position:absolute;left:3px;top:1px;width:17px;height:16px"><svg width="17" height="16" viewBox="0 0 17 16" style="position:absolute;left:0;top:0;overflow:visible" shape-rendering="crispEdges"><rect x="5" y="9" width="6" height="5" fill="#000"/><rect x="6" y="10" width="4" height="3" fill="#c4c494"/><rect x="6" y="10" width="4" height="1" fill="#e0e0b8"/><rect x="3" y="5" width="10" height="5" fill="#000"/><rect x="4" y="6" width="8" height="3" fill="#1a58a8"/><rect x="4" y="6" width="8" height="1" fill="#f4c0c0"/><rect x="1" y="0" width="14" height="6" fill="#000"/><rect x="2" y="1" width="12" height="4" fill="#98c048"/><rect x="2" y="1" width="12" height="1" fill="#d4ec98"/></svg></div></div>
<div style="position:absolute;left:1009px;top:15px;width:24px;height:20px;box-sizing:border-box;border:1px solid #4a4a4a;border-radius:0;background:radial-gradient(ellipse 75% 70% at 45% 35%,#fffcec 0%,#fdf2c8 50%,#fce9aa 85%,#f9df90 100%)"><div style="position:absolute;left:3px;top:1px;width:17px;height:16px"><svg width="17" height="16" viewBox="0 0 17 16" style="position:absolute;left:0;top:0;overflow:visible" shape-rendering="crispEdges"><path d="M1 0 H5 V4 H6 V5 H9 V4 H10 V0 H14 V4 H15 V15 H9 V11 H6 V15 H0 V4 H1 Z" fill="#000"/><path d="M2 1 H4 V5 H5 V6 H10 V5 H11 V1 H13 V5 H14 V14 H10 V9 H5 V14 H1 V5 H2 Z" fill="#8c94d4"/><rect x="2" y="2" width="1" height="11" fill="#f4f4ff"/><rect x="11" y="2" width="1" height="11" fill="#f4f4ff"/><rect x="6" y="10" width="3" height="1" fill="#8c94d4"/></svg></div></div>
<div style="position:absolute;left:1035px;top:15px;width:24px;height:20px;box-sizing:border-box;border:1px solid #4a4a4a;border-radius:0;background:radial-gradient(ellipse 75% 70% at 45% 35%,#fffcec 0%,#fdf2c8 50%,#fce9aa 85%,#f9df90 100%)"><div style="position:absolute;left:3px;top:1px;width:17px;height:16px"><svg width="17" height="16" viewBox="0 0 17 16" style="position:absolute;left:0;top:0;overflow:visible" shape-rendering="crispEdges"><path d="M1 0 H5 V4 H6 V5 H9 V4 H10 V0 H14 V4 H15 V15 H9 V11 H6 V15 H0 V4 H1 Z" fill="#8c8a78"/><path d="M2 1 H4 V5 H5 V6 H10 V5 H11 V1 H13 V5 H14 V14 H10 V9 H5 V14 H1 V5 H2 Z" fill="#c8c8c8"/><rect x="2" y="2" width="1" height="11" fill="#f4f4f4"/><rect x="11" y="2" width="1" height="11" fill="#f4f4f4"/><rect x="6" y="10" width="3" height="1" fill="#c8c8c8"/><path d="M9 7 H12 V9 H14 V12 H12 V14 H9 V12 H7 V9 H9 Z" fill="#8c8a78"/><path d="M10 8 H11 V10 H13 V11 H11 V13 H10 V11 H8 V10 H10 Z" fill="#fffef0"/></svg></div></div>
<div style="position:absolute;left:1061px;top:15px;width:34px;height:20px;box-sizing:border-box;border:1px solid #4a4a4a;border-radius:0;background:radial-gradient(ellipse 75% 70% at 45% 35%,#fffcec 0%,#fdf2c8 50%,#fce9aa 85%,#f9df90 100%)"><div style="position:absolute;left:3px;top:1px;width:17px;height:16px"><svg width="17" height="16" viewBox="0 0 17 16" style="position:absolute;left:0;top:0;overflow:visible" shape-rendering="crispEdges"><path d="M0 0 H15 V3 L10 8 V15 H5 V8 L0 3 Z" fill="#000"/><path d="M1 1 H14 V2.6 L9 7.6 V14 H6 V7.6 L1 2.6 Z" fill="#9cb6dc"/><path d="M2 1.5 H13 M6.5 8 V13.5" stroke="#f4f8ff" stroke-width="1"/><rect x="9" y="7" width="5" height="5" fill="#000"/><rect x="10" y="8" width="3" height="3" fill="#fff6c8"/></svg></div><div style="position:absolute;left:21px;top:1px;width:1px;height:17px;background:#cfc296;box-shadow:1px 0 0 #fffbea"></div><div style="position:absolute;left:25px;top:10px;width:0;height:0;border-left:4px solid transparent;border-bottom:4px solid #1a1a30"></div></div>
<div style="position:absolute;left:1099px;top:18px;width:2px;height:13px;background:#ffffff;border-left:1px solid #7c8894;box-sizing:border-box"></div>
<div style="position:absolute;left:1105px;top:15px;width:34px;height:20px;box-sizing:border-box;border:1px solid #4a4a4a;border-radius:0;background:radial-gradient(ellipse 75% 70% at 45% 35%,#fffcec 0%,#fdf2c8 50%,#fce9aa 85%,#f9df90 100%)"><div style="position:absolute;left:3px;top:1px;width:17px;height:16px"><svg width="17" height="16" viewBox="0 0 17 16" style="position:absolute;left:0;top:0;overflow:visible" shape-rendering="crispEdges"><path d="M0 0 H14 V5 H11 V4 H6 L9.5 7.5 L6 11 H11 V10 H14 V15 H0 V12 L4.5 7.5 L0 3 Z" fill="#000"/><path d="M1.2 1.2 H12.8 V3.8 H11.8 V2.8 H3.2 L7.8 7.5 L3.2 12.2 H11.8 V11.2 H12.8 V13.8 H1.2 V12.4 L6 7.5 L1.2 2.6 Z" fill="#7cbc1c" shape-rendering="auto"/><path d="M2 2 H11" stroke="#c8f080" stroke-width="1"/></svg></div><div style="position:absolute;left:21px;top:1px;width:1px;height:17px;background:#cfc296;box-shadow:1px 0 0 #fffbea"></div><div style="position:absolute;left:25px;top:10px;width:0;height:0;border-left:4px solid transparent;border-bottom:4px solid #1a1a30"></div></div>
<div style="position:absolute;left:1141px;top:15px;width:34px;height:20px;box-sizing:border-box;border:1px solid #4a4a4a;border-radius:0;background:radial-gradient(ellipse 75% 70% at 45% 35%,#fffcec 0%,#fdf2c8 50%,#fce9aa 85%,#f9df90 100%)"><div style="position:absolute;left:3px;top:1px;width:17px;height:16px"><svg width="17" height="16" viewBox="0 0 17 16" style="position:absolute;left:0;top:0;overflow:visible" shape-rendering="crispEdges"><g transform="translate(-1,0)"><path d="M0 0 H9 V3 H5 L7 4.5 L5 6 H9 V9 H0 V7 L2.5 4.5 L0 2 Z" fill="#8c8450"/><path d="M1 1 H8 V2 H3 L5.5 4.5 L3 7 H8 V8 H1 V7.4 L3.6 4.5 L1 1.6 Z" fill="#f4ec48"/><rect x="1" y="1" width="4" height="1" fill="#f4ec48"/><rect x="1" y="7" width="4" height="1" fill="#f4ec48"/></g><g transform="translate(6,6)"><path d="M0 0 H9 V3 H5 L7 4.5 L5 6 H9 V9 H0 V7 L2.5 4.5 L0 2 Z" fill="#8c7450"/><path d="M1 1 H8 V2 H3 L5.5 4.5 L3 7 H8 V8 H1 V7.4 L3.6 4.5 L1 1.6 Z" fill="#f6c050"/><rect x="1" y="1" width="4" height="1" fill="#f6c050"/><rect x="1" y="7" width="4" height="1" fill="#f6c050"/></g><path d="M-1 14.5 L15 0" stroke="#404040" stroke-width="1" shape-rendering="auto"/></svg></div><div style="position:absolute;left:21px;top:1px;width:1px;height:17px;background:#cfc296;box-shadow:1px 0 0 #fffbea"></div><div style="position:absolute;left:25px;top:10px;width:0;height:0;border-left:4px solid transparent;border-bottom:4px solid #9a9a9a"></div></div>
<div style="position:absolute;left:1179px;top:18px;width:2px;height:13px;background:#ffffff;border-left:1px solid #7c8894;box-sizing:border-box"></div>
<div style="position:absolute;left:1185px;top:15px;width:24px;height:20px;box-sizing:border-box;border:1px solid #4a4a4a;border-radius:0;background:radial-gradient(ellipse 75% 70% at 45% 35%,#fffcec 0%,#fdf2c8 50%,#fce9aa 85%,#f9df90 100%)"><div style="position:absolute;left:3px;top:1px;width:17px;height:16px"><svg width="17" height="16" viewBox="0 0 17 16" style="position:absolute;left:0;top:0;overflow:visible" shape-rendering="crispEdges"><path d="M2 0 H11 L14 3 V11 H2 Z" fill="#000"/><path d="M3 1 H10 L13 4 V10 H3 Z" fill="#dce8f8"/><path d="M10 1 V4 H13" fill="#a8c8e8" stroke="#000" stroke-width="1"/><rect x="1" y="10" width="14" height="6" fill="#000"/><rect x="2" y="11" width="12" height="2" fill="#ffffff"/><rect x="2" y="13" width="12" height="2" fill="#8090b8"/></svg></div></div>
<div style="position:absolute;left:1211px;top:15px;width:37px;height:20px;box-sizing:border-box;border:1px solid #4a4a4a;border-radius:0;background:radial-gradient(ellipse 75% 70% at 45% 35%,#fffcec 0%,#fdf2c8 50%,#fce9aa 85%,#f9df90 100%)"><div style="position:absolute;left:3px;top:1px;width:17px;height:16px"><svg width="17" height="16" viewBox="0 0 17 16" style="position:absolute;left:0;top:0;overflow:visible" shape-rendering="crispEdges"><path d="M8 0 H14 L16 2 V10 H8 Z" fill="#000"/><path d="M9 1 H13 L15 3 V9 H9 Z" fill="#f4f4f8"/><path d="M6 2 H12 L14 4 V12 H6 Z" fill="#000"/><path d="M7 3 H11 L13 5 V11 H7 Z" fill="#fff"/><path d="M8 6 H12 M8 8 H12 M8 10 H12" stroke="#90a0b8" stroke-width="1"/><g shape-rendering="auto"><circle cx="5.2" cy="9.6" r="5" fill="#4a90ee" stroke="#000" stroke-width="1.3"/><path d="M5.5 5 A4.6 4.6 0 0 1 5.5 14.2 Z" fill="#b8dcfa"/><path d="M2 7 A4 4 0 0 1 5 5.2" stroke="#c0e0ff" stroke-width="1.2" fill="none"/><path d="M5.5 5.5 V14" stroke="#fff" stroke-width="1.2"/></g></svg></div><div style="position:absolute;left:28px;top:10px;width:0;height:0;border-left:4px solid transparent;border-bottom:4px solid #1a1a30"></div></div>
<div style="position:absolute;left:1250px;top:15px;width:37px;height:20px;box-sizing:border-box;border:1px solid #4a4a4a;border-radius:0;background:radial-gradient(ellipse 75% 70% at 45% 35%,#fffcec 0%,#fdf2c8 50%,#fce9aa 85%,#f9df90 100%)"><div style="position:absolute;left:3px;top:1px;width:17px;height:16px"><svg width="17" height="16" viewBox="0 0 17 16" style="position:absolute;left:0;top:0;overflow:visible" shape-rendering="crispEdges"><path d="M0 0 H8 V12 H0 Z" fill="#000"/><rect x="1" y="1" width="6" height="10" fill="#e8f0fc"/><path d="M3 4 H6 M3 6 H6" stroke="#5878a8" stroke-width="1"/><path d="M7 2 H13 L16 5 V15 H7 Z" fill="#000"/><path d="M8 3 H12 L15 6 V14 H8 Z" fill="#2c9a2c"/><path d="M4 7 H9 V5 L13 9 L9 13 V11 H4 Z" fill="#000"/><path d="M5 8 H10 V7 L11.8 9 L10 11 V10 H5 Z" fill="#fff020"/></svg></div><div style="position:absolute;left:28px;top:10px;width:0;height:0;border-left:4px solid transparent;border-bottom:4px solid #1a1a30"></div></div>
<div style="position:absolute;left:1289px;top:15px;width:24px;height:20px;box-sizing:border-box;border:1px solid #4a4a4a;border-radius:0;background:radial-gradient(ellipse 75% 70% at 45% 35%,#fffcec 0%,#fdf2c8 50%,#fce9aa 85%,#f9df90 100%)"><div style="position:absolute;left:3px;top:1px;width:17px;height:16px"><svg width="17" height="16" viewBox="0 0 17 16" style="position:absolute;left:0;top:0;overflow:visible" shape-rendering="crispEdges"><rect x="0" y="1" width="16" height="13" fill="#000"/><rect x="1" y="2" width="4" height="3" fill="#f4d820"/><rect x="6" y="2" width="4" height="3" fill="#a8c0f0"/><rect x="11" y="2" width="4" height="3" fill="#40a030"/><rect x="1" y="6" width="4" height="3" fill="#f89010"/><rect x="6" y="6" width="4" height="3" fill="#c0a0e0"/><rect x="11" y="6" width="4" height="3" fill="#e0b888"/><rect x="1" y="10" width="4" height="3" fill="#f8a8b0"/><rect x="6" y="10" width="4" height="3" fill="#98d030"/><rect x="11" y="10" width="4" height="3" fill="#40a8f8"/></svg></div></div>
<div style="position:absolute;left:1317px;top:18px;width:2px;height:13px;background:#ffffff;border-left:1px solid #7c8894;box-sizing:border-box"></div>
<div style="position:absolute;left:1323px;top:15px;width:24px;height:20px;box-sizing:border-box;border:1px solid #4a4a4a;border-radius:0;background:radial-gradient(ellipse 75% 70% at 45% 35%,#fffcec 0%,#fdf2c8 50%,#fce9aa 85%,#f9df90 100%)"><div style="position:absolute;left:3px;top:1px;width:17px;height:16px"><svg width="17" height="16" viewBox="0 0 17 16" style="position:absolute;left:0;top:0;overflow:visible" shape-rendering="crispEdges"><g transform="translate(0,0)"><rect x="0" y="0" width="6" height="15" fill="#000"/><rect x="1" y="1" width="4" height="13" fill="#8ea4dc"/><rect x="1" y="1" width="1" height="13" fill="#c8d8f8"/><rect x="8" y="2" width="6" height="7" fill="#000"/><rect x="9" y="3" width="4" height="5" fill="#f02020"/><rect x="6" y="9" width="5" height="6" fill="#000"/><rect x="7" y="10" width="3" height="4" fill="#f8fcff"/><rect x="10" y="6" width="6" height="9" fill="#000"/><rect x="11" y="7" width="4" height="7" fill="#f8ec00"/><rect x="11" y="7" width="1" height="7" fill="#ffffa0"/></g></svg></div></div>
<div style="position:absolute;left:1351px;top:18px;width:2px;height:13px;background:#ffffff;border-left:1px solid #7c8894;box-sizing:border-box"></div>
<div style="position:absolute;left:923px;top:45px;width:24px;height:20px;box-sizing:border-box;border:1px solid #4a4a4a;border-radius:0;background:radial-gradient(ellipse 75% 70% at 45% 35%,#fffcec 0%,#fdf2c8 50%,#fce9aa 85%,#f9df90 100%)"><div style="position:absolute;left:3px;top:1px;width:17px;height:16px"><svg width="17" height="16" viewBox="0 0 17 16" style="position:absolute;left:0;top:0;overflow:visible" shape-rendering="crispEdges"><rect x="0" y="0" width="15" height="14" fill="#000"/><rect x="1" y="1" width="13" height="12" fill="#0008d8"/><rect x="1" y="1" width="13" height="1" fill="#80c0ff"/><rect x="1" y="1" width="1" height="12" fill="#80c0ff"/><rect x="6" y="2" width="3" height="3" fill="#fff"/><path d="M5 6 H9 V11 H10 V12 H5 V11 H6 V7 H5 Z" fill="#fff"/></svg></div></div>
<div style="position:absolute;left:951px;top:48px;width:2px;height:13px;background:#ffffff;border-left:1px solid #7c8894;box-sizing:border-box"></div>
<div style="position:absolute;left:957px;top:45px;width:24px;height:20px;box-sizing:border-box;border:1px solid #4a4a4a;border-radius:0;background:radial-gradient(ellipse 75% 70% at 45% 35%,#fffcec 0%,#fdf2c8 50%,#fce9aa 85%,#f9df90 100%)"><div style="position:absolute;left:3px;top:1px;width:17px;height:16px"><svg width="17" height="16" viewBox="0 0 17 16" style="position:absolute;left:0;top:0;overflow:visible" shape-rendering="crispEdges"><g shape-rendering="auto"><circle cx="7.3" cy="7.2" r="7.2" fill="#000"/><path d="M7.3 7.2 L1.3 3.2 A6.2 6.2 0 0 1 7.3 1 Z" fill="#8060c0"/><path d="M7.3 7.2 L7.3 1 A6.2 6.2 0 0 1 12.6 4 Z" fill="#2040f0"/><path d="M7.3 7.2 L12.6 4 A6.2 6.2 0 0 1 12 11.4 Z" fill="#20c020"/><path d="M7.3 7.2 L12 11.4 A6.2 6.2 0 0 1 6 13.3 Z" fill="#f8d800"/><path d="M7.3 7.2 L6 13.3 A6.2 6.2 0 0 1 2 11 Z" fill="#f07010"/><path d="M7.3 7.2 L2 11 A6.2 6.2 0 0 1 1.3 3.2 Z" fill="#e81818"/></g></svg></div></div>
<div style="position:absolute;left:922px;top:65px;width:447px;height:1px;background:#d3e1ee"></div>
<div style="position:absolute;left:922px;top:67px;width:447px;height:1px;background:#b9c5d0"></div>
<div style="position:absolute;left:924px;top:73px;font:21px 'Liberation Sans', sans-serif;letter-spacing:-0.75px;-webkit-text-stroke:0.12px #000;color:#000;white-space:nowrap">Abgänge</div>
<div style="position:absolute;left:922px;top:100px;width:447px;height:1px;background:#b9c5d0"></div>
<div style="position:absolute;left:9px;top:101px;width:425px;height:197px;overflow:hidden"><div style="position:absolute;left:0;top:0;width:425px;height:1px;background:#d2e0ee"></div><div style="position:absolute;left:0;top:1px;width:425px;height:18px;background:linear-gradient(#eeeff1,#e1e4e8 30%,#d9dde2 70%,#d2d7dd)"></div><div style="position:absolute;left:0;top:19px;width:425px;height:1px;background:#b6c0ca"></div><div style="position:absolute;left:0px;top:0;width:131px;height:19px;text-align:left;padding-left:4px;font:12px 'Liberation Sans', sans-serif;line-height:23px;letter-spacing:0px;color:#000;white-space:nowrap;overflow:hidden">Material</div><div style="position:absolute;left:131px;top:0;width:77px;height:19px;text-align:right;padding-right:9px;font:12px 'Liberation Sans', sans-serif;line-height:23px;letter-spacing:0.35px;color:#000;white-space:nowrap;overflow:hidden">04.2012</div><div style="position:absolute;left:131px;top:1px;width:1px;height:18px;background:#aab3bd;box-shadow:1px 0 0 #f4f6f8"></div><div style="position:absolute;left:208px;top:0;width:77px;height:19px;text-align:right;padding-right:9px;font:12px 'Liberation Sans', sans-serif;line-height:23px;letter-spacing:0.35px;color:#000;white-space:nowrap;overflow:hidden">05.2012</div><div style="position:absolute;left:208px;top:1px;width:1px;height:18px;background:#aab3bd;box-shadow:1px 0 0 #f4f6f8"></div><div style="position:absolute;left:285px;top:0;width:77px;height:19px;text-align:right;padding-right:9px;font:12px 'Liberation Sans', sans-serif;line-height:23px;letter-spacing:0.35px;color:#000;white-space:nowrap;overflow:hidden">06.2012</div><div style="position:absolute;left:285px;top:1px;width:1px;height:18px;background:#aab3bd;box-shadow:1px 0 0 #f4f6f8"></div><div style="position:absolute;left:362px;top:0;width:77px;height:19px;text-align:right;padding-right:9px;font:12px 'Liberation Sans', sans-serif;line-height:23px;letter-spacing:0.35px;color:#000;white-space:nowrap;overflow:hidden">07.2012</div><div style="position:absolute;left:362px;top:1px;width:1px;height:18px;background:#aab3bd;box-shadow:1px 0 0 #f4f6f8"></div><div style="position:absolute;left:439px;top:0;width:77px;height:19px;text-align:right;padding-right:9px;font:12px 'Liberation Sans', sans-serif;line-height:23px;letter-spacing:0.35px;color:#000;white-space:nowrap;overflow:hidden">08.2012</div><div style="position:absolute;left:439px;top:1px;width:1px;height:18px;background:#aab3bd;box-shadow:1px 0 0 #f4f6f8"></div><div style="position:absolute;left:0;top:20px;width:425px;height:18px;background:#dfe9f4"></div><div style="position:absolute;left:0;top:38px;width:425px;height:1px;background:#b9c5d1"></div><div style="position:absolute;left:4px;top:20px;height:18px;font:12px 'Liberation Sans', sans-serif;line-height:16px;letter-spacing:-0.3px;color:#000;white-space:nowrap;text-decoration:underline">P-102</div><div style="position:absolute;left:131px;top:20px;width:1px;height:19px;background:#b9c5d1"></div><div style="position:absolute;left:131px;top:20px;width:77px;height:18px;text-align:right;padding-right:6px;font:12px 'Liberation Sans', sans-serif;line-height:16px;letter-spacing:0.5px;color:#000;white-space:nowrap">418.752,1<span style="display:inline-block;width:9px;height:10px;position:relative;letter-spacing:0"><i style="position:absolute;left:0px;top:11px;width:1px;height:1px;background:#000;box-shadow:0 0 0.6px 0.4px rgba(0,0,0,0.55)"></i><i style="position:absolute;left:3px;top:11px;width:1px;height:1px;background:#000;box-shadow:0 0 0.6px 0.4px rgba(0,0,0,0.55)"></i><i style="position:absolute;left:6px;top:11px;width:1px;height:1px;background:#000;box-shadow:0 0 0.6px 0.4px rgba(0,0,0,0.55)"></i></span></div><div style="position:absolute;left:208px;top:20px;width:1px;height:19px;background:#b9c5d1"></div><div style="position:absolute;left:208px;top:20px;width:77px;height:18px;text-align:right;padding-right:6px;font:12px 'Liberation Sans', sans-serif;line-height:16px;letter-spacing:0.5px;color:#000;white-space:nowrap">418.177,7<span style="display:inline-block;width:9px;height:10px;position:relative;letter-spacing:0"><i style="position:absolute;left:0px;top:11px;width:1px;height:1px;background:#000;box-shadow:0 0 0.6px 0.4px rgba(0,0,0,0.55)"></i><i style="position:absolute;left:3px;top:11px;width:1px;height:1px;background:#000;box-shadow:0 0 0.6px 0.4px rgba(0,0,0,0.55)"></i><i style="position:absolute;left:6px;top:11px;width:1px;height:1px;background:#000;box-shadow:0 0 0.6px 0.4px rgba(0,0,0,0.55)"></i></span></div><div style="position:absolute;left:285px;top:20px;width:1px;height:19px;background:#b9c5d1"></div><div style="position:absolute;left:285px;top:20px;width:77px;height:18px;text-align:right;padding-right:6px;font:12px 'Liberation Sans', sans-serif;line-height:16px;letter-spacing:0.5px;color:#000;white-space:nowrap">418.177,7<span style="display:inline-block;width:9px;height:10px;position:relative;letter-spacing:0"><i style="position:absolute;left:0px;top:11px;width:1px;height:1px;background:#000;box-shadow:0 0 0.6px 0.4px rgba(0,0,0,0.55)"></i><i style="position:absolute;left:3px;top:11px;width:1px;height:1px;background:#000;box-shadow:0 0 0.6px 0.4px rgba(0,0,0,0.55)"></i><i style="position:absolute;left:6px;top:11px;width:1px;height:1px;background:#000;box-shadow:0 0 0.6px 0.4px rgba(0,0,0,0.55)"></i></span></div><div style="position:absolute;left:362px;top:20px;width:1px;height:19px;background:#b9c5d1"></div><div style="position:absolute;left:362px;top:20px;width:77px;height:18px;text-align:right;padding-right:6px;font:12px 'Liberation Sans', sans-serif;line-height:16px;letter-spacing:0.5px;color:#000;white-space:nowrap">418.177,7<span style="display:inline-block;width:9px;height:10px;position:relative;letter-spacing:0"><i style="position:absolute;left:0px;top:11px;width:1px;height:1px;background:#000;box-shadow:0 0 0.6px 0.4px rgba(0,0,0,0.55)"></i><i style="position:absolute;left:3px;top:11px;width:1px;height:1px;background:#000;box-shadow:0 0 0.6px 0.4px rgba(0,0,0,0.55)"></i><i style="position:absolute;left:6px;top:11px;width:1px;height:1px;background:#000;box-shadow:0 0 0.6px 0.4px rgba(0,0,0,0.55)"></i></span></div><div style="position:absolute;left:439px;top:20px;width:1px;height:19px;background:#b9c5d1"></div><div style="position:absolute;left:439px;top:20px;width:77px;height:18px;text-align:right;padding-right:6px;font:12px 'Liberation Sans', sans-serif;line-height:16px;letter-spacing:0.5px;color:#000;white-space:nowrap">418.177,7<span style="display:inline-block;width:9px;height:10px;position:relative;letter-spacing:0"><i style="position:absolute;left:0px;top:11px;width:1px;height:1px;background:#000;box-shadow:0 0 0.6px 0.4px rgba(0,0,0,0.55)"></i><i style="position:absolute;left:3px;top:11px;width:1px;height:1px;background:#000;box-shadow:0 0 0.6px 0.4px rgba(0,0,0,0.55)"></i><i style="position:absolute;left:6px;top:11px;width:1px;height:1px;background:#000;box-shadow:0 0 0.6px 0.4px rgba(0,0,0,0.55)"></i></span></div><div style="position:absolute;left:0;top:39px;width:425px;height:18px;background:#dfe9f4"></div><div style="position:absolute;left:0;top:57px;width:425px;height:1px;background:#b9c5d1"></div><div style="position:absolute;left:4px;top:39px;height:18px;font:12px 'Liberation Sans', sans-serif;line-height:16px;letter-spacing:-0.3px;color:#000;white-space:nowrap;text-decoration:underline">P-103</div><div style="position:absolute;left:131px;top:39px;width:1px;height:19px;background:#b9c5d1"></div><div style="position:absolute;left:131px;top:39px;width:77px;height:18px;text-align:right;padding-right:5px;font:12px 'Liberation Sans', sans-serif;line-height:16px;letter-spacing:0.5px;color:#000;white-space:nowrap">50.604,99<span style="display:inline-block;width:5px"></span></div><div style="position:absolute;left:208px;top:39px;width:1px;height:19px;background:#b9c5d1"></div><div style="position:absolute;left:208px;top:39px;width:77px;height:18px;text-align:right;padding-right:5px;font:12px 'Liberation Sans', sans-serif;line-height:16px;letter-spacing:0.5px;color:#000;white-space:nowrap">50.604,99<span style="display:inline-block;width:5px"></span></div><div style="position:absolute;left:285px;top:39px;width:1px;height:19px;background:#b9c5d1"></div><div style="position:absolute;left:285px;top:39px;width:77px;height:18px;text-align:right;padding-right:5px;font:12px 'Liberation Sans', sans-serif;line-height:16px;letter-spacing:0.5px;color:#000;white-space:nowrap">50.604,99<span style="display:inline-block;width:5px"></span></div><div style="position:absolute;left:362px;top:39px;width:1px;height:19px;background:#b9c5d1"></div><div style="position:absolute;left:362px;top:39px;width:77px;height:18px;text-align:right;padding-right:5px;font:12px 'Liberation Sans', sans-serif;line-height:16px;letter-spacing:0.5px;color:#000;white-space:nowrap">50.604,99<span style="display:inline-block;width:5px"></span></div><div style="position:absolute;left:439px;top:39px;width:1px;height:19px;background:#b9c5d1"></div><div style="position:absolute;left:439px;top:39px;width:77px;height:18px;text-align:right;padding-right:5px;font:12px 'Liberation Sans', sans-serif;line-height:16px;letter-spacing:0.5px;color:#000;white-space:nowrap">50.604,99<span style="display:inline-block;width:5px"></span></div><div style="position:absolute;left:0;top:58px;width:425px;height:18px;background:#dfe9f4"></div><div style="position:absolute;left:0;top:76px;width:425px;height:1px;background:#b9c5d1"></div><div style="position:absolute;left:4px;top:58px;height:18px;font:12px 'Liberation Sans', sans-serif;line-height:16px;letter-spacing:-0.3px;color:#000;white-space:nowrap;text-decoration:underline">P-103DISOPROFIL</div><div style="position:absolute;left:131px;top:58px;width:1px;height:19px;background:#b9c5d1"></div><div style="position:absolute;left:131px;top:58px;width:77px;height:18px;text-align:right;padding-right:5px;font:12px 'Liberation Sans', sans-serif;line-height:16px;letter-spacing:0.5px;color:#000;white-space:nowrap">0,00<span style="display:inline-block;width:5px"></span></div><div style="position:absolute;left:208px;top:58px;width:1px;height:19px;background:#b9c5d1"></div><div style="position:absolute;left:208px;top:58px;width:77px;height:18px;text-align:right;padding-right:5px;font:12px 'Liberation Sans', sans-serif;line-height:16px;letter-spacing:0.5px;color:#000;white-space:nowrap">0,00<span style="display:inline-block;width:5px"></span></div><div style="position:absolute;left:285px;top:58px;width:1px;height:19px;background:#b9c5d1"></div><div style="position:absolute;left:285px;top:58px;width:77px;height:18px;text-align:right;padding-right:5px;font:12px 'Liberation Sans', sans-serif;line-height:16px;letter-spacing:0.5px;color:#000;white-space:nowrap">0,00<span style="display:inline-block;width:5px"></span></div><div style="position:absolute;left:362px;top:58px;width:1px;height:19px;background:#b9c5d1"></div><div style="position:absolute;left:362px;top:58px;width:77px;height:18px;text-align:right;padding-right:5px;font:12px 'Liberation Sans', sans-serif;line-height:16px;letter-spacing:0.5px;color:#000;white-space:nowrap">0,00<span style="display:inline-block;width:5px"></span></div><div style="position:absolute;left:439px;top:58px;width:1px;height:19px;background:#b9c5d1"></div><div style="position:absolute;left:439px;top:58px;width:77px;height:18px;text-align:right;padding-right:5px;font:12px 'Liberation Sans', sans-serif;line-height:16px;letter-spacing:0.5px;color:#000;white-space:nowrap">0,00<span style="display:inline-block;width:5px"></span></div><div style="position:absolute;left:0;top:77px;width:425px;height:18px;background:#dfe9f4"></div><div style="position:absolute;left:0;top:95px;width:425px;height:1px;background:#b9c5d1"></div><div style="position:absolute;left:4px;top:77px;height:18px;font:12px 'Liberation Sans', sans-serif;line-height:16px;letter-spacing:-0.3px;color:#000;white-space:nowrap;text-decoration:underline">P-104</div><div style="position:absolute;left:131px;top:77px;width:1px;height:19px;background:#b9c5d1"></div><div style="position:absolute;left:131px;top:77px;width:77px;height:18px;text-align:right;padding-right:5px;font:12px 'Liberation Sans', sans-serif;line-height:16px;letter-spacing:0.5px;color:#000;white-space:nowrap">46.441,50<span style="display:inline-block;width:5px;text-align:left;letter-spacing:0">-</span></div><div style="position:absolute;left:208px;top:77px;width:1px;height:19px;background:#b9c5d1"></div><div style="position:absolute;left:208px;top:77px;width:77px;height:18px;text-align:right;padding-right:5px;font:12px 'Liberation Sans', sans-serif;line-height:16px;letter-spacing:0.5px;color:#000;white-space:nowrap">46.441,50<span style="display:inline-block;width:5px;text-align:left;letter-spacing:0">-</span></div><div style="position:absolute;left:285px;top:77px;width:1px;height:19px;background:#b9c5d1"></div><div style="position:absolute;left:285px;top:77px;width:77px;height:18px;text-align:right;padding-right:5px;font:12px 'Liberation Sans', sans-serif;line-height:16px;letter-spacing:0.5px;color:#000;white-space:nowrap">46.441,50<span style="display:inline-block;width:5px;text-align:left;letter-spacing:0">-</span></div><div style="position:absolute;left:362px;top:77px;width:1px;height:19px;background:#b9c5d1"></div><div style="position:absolute;left:362px;top:77px;width:77px;height:18px;text-align:right;padding-right:5px;font:12px 'Liberation Sans', sans-serif;line-height:16px;letter-spacing:0.5px;color:#000;white-space:nowrap">46.441,50<span style="display:inline-block;width:5px;text-align:left;letter-spacing:0">-</span></div><div style="position:absolute;left:439px;top:77px;width:1px;height:19px;background:#b9c5d1"></div><div style="position:absolute;left:439px;top:77px;width:77px;height:18px;text-align:right;padding-right:5px;font:12px 'Liberation Sans', sans-serif;line-height:16px;letter-spacing:0.5px;color:#000;white-space:nowrap">46.441,50<span style="display:inline-block;width:5px;text-align:left;letter-spacing:0">-</span></div><div style="position:absolute;left:0;top:96px;width:425px;height:18px;background:#dfe9f4"></div><div style="position:absolute;left:0;top:114px;width:425px;height:1px;background:#b9c5d1"></div><div style="position:absolute;left:1px;top:96px;width:129px;height:18px;background:#fdd985"></div><div style="position:absolute;left:4px;top:96px;height:18px;font:12px 'Liberation Sans', sans-serif;line-height:16px;letter-spacing:-0.3px;color:#000;white-space:nowrap;text-decoration:underline">P-105</div><div style="position:absolute;left:131px;top:96px;width:1px;height:19px;background:#b9c5d1"></div><div style="position:absolute;left:132px;top:96px;width:75px;height:18px;background:#fdd985"></div><div style="position:absolute;left:131px;top:96px;width:77px;height:18px;text-align:right;padding-right:5px;font:12px 'Liberation Sans', sans-serif;line-height:16px;letter-spacing:0.5px;color:#000;white-space:nowrap">32.160,00<span style="display:inline-block;width:5px"></span></div><div style="position:absolute;left:208px;top:96px;width:1px;height:19px;background:#b9c5d1"></div><div style="position:absolute;left:209px;top:96px;width:75px;height:18px;background:#fdd985"></div><div style="position:absolute;left:208px;top:96px;width:77px;height:18px;text-align:right;padding-right:5px;font:12px 'Liberation Sans', sans-serif;line-height:16px;letter-spacing:0.5px;color:#000;white-space:nowrap">32.160,00<span style="display:inline-block;width:5px"></span></div><div style="position:absolute;left:285px;top:96px;width:1px;height:19px;background:#b9c5d1"></div><div style="position:absolute;left:286px;top:96px;width:75px;height:18px;background:#fdd985"></div><div style="position:absolute;left:285px;top:96px;width:77px;height:18px;text-align:right;padding-right:5px;font:12px 'Liberation Sans', sans-serif;line-height:16px;letter-spacing:0.5px;color:#000;white-space:nowrap">32.160,00<span style="display:inline-block;width:5px"></span></div><div style="position:absolute;left:362px;top:96px;width:1px;height:19px;background:#b9c5d1"></div><div style="position:absolute;left:363px;top:96px;width:75px;height:18px;background:#fdd985"></div><div style="position:absolute;left:362px;top:96px;width:77px;height:18px;text-align:right;padding-right:5px;font:12px 'Liberation Sans', sans-serif;line-height:16px;letter-spacing:0.5px;color:#000;white-space:nowrap">32.160,00<span style="display:inline-block;width:5px"></span></div><div style="position:absolute;left:439px;top:96px;width:1px;height:19px;background:#b9c5d1"></div><div style="position:absolute;left:440px;top:96px;width:75px;height:18px;background:#fdd985"></div><div style="position:absolute;left:439px;top:96px;width:77px;height:18px;text-align:right;padding-right:5px;font:12px 'Liberation Sans', sans-serif;line-height:16px;letter-spacing:0.5px;color:#000;white-space:nowrap">32.160,00<span style="display:inline-block;width:5px"></span></div><div style="position:absolute;left:0;top:115px;width:425px;height:18px;background:#dfe9f4"></div><div style="position:absolute;left:0;top:133px;width:425px;height:1px;background:#b9c5d1"></div><div style="position:absolute;left:4px;top:115px;height:18px;font:12px 'Liberation Sans', sans-serif;line-height:16px;letter-spacing:-0.3px;color:#000;white-space:nowrap;text-decoration:underline">P-106</div><div style="position:absolute;left:131px;top:115px;width:1px;height:19px;background:#b9c5d1"></div><div style="position:absolute;left:131px;top:115px;width:77px;height:18px;text-align:right;padding-right:5px;font:12px 'Liberation Sans', sans-serif;line-height:16px;letter-spacing:0.5px;color:#000;white-space:nowrap">13.738,34<span style="display:inline-block;width:5px;text-align:left;letter-spacing:0">-</span></div><div style="position:absolute;left:208px;top:115px;width:1px;height:19px;background:#b9c5d1"></div><div style="position:absolute;left:208px;top:115px;width:77px;height:18px;text-align:right;padding-right:5px;font:12px 'Liberation Sans', sans-serif;line-height:16px;letter-spacing:0.5px;color:#000;white-space:nowrap">13.738,34<span style="display:inline-block;width:5px;text-align:left;letter-spacing:0">-</span></div><div style="position:absolute;left:285px;top:115px;width:1px;height:19px;background:#b9c5d1"></div><div style="position:absolute;left:285px;top:115px;width:77px;height:18px;text-align:right;padding-right:5px;font:12px 'Liberation Sans', sans-serif;line-height:16px;letter-spacing:0.5px;color:#000;white-space:nowrap">13.738,34<span style="display:inline-block;width:5px;text-align:left;letter-spacing:0">-</span></div><div style="position:absolute;left:362px;top:115px;width:1px;height:19px;background:#b9c5d1"></div><div style="position:absolute;left:362px;top:115px;width:77px;height:18px;text-align:right;padding-right:5px;font:12px 'Liberation Sans', sans-serif;line-height:16px;letter-spacing:0.5px;color:#000;white-space:nowrap">13.738,34<span style="display:inline-block;width:5px;text-align:left;letter-spacing:0">-</span></div><div style="position:absolute;left:439px;top:115px;width:1px;height:19px;background:#b9c5d1"></div><div style="position:absolute;left:439px;top:115px;width:77px;height:18px;text-align:right;padding-right:5px;font:12px 'Liberation Sans', sans-serif;line-height:16px;letter-spacing:0.5px;color:#000;white-space:nowrap">13.738,34<span style="display:inline-block;width:5px;text-align:left;letter-spacing:0">-</span></div><div style="position:absolute;left:0;top:134px;width:425px;height:18px;background:#dfe9f4"></div><div style="position:absolute;left:0;top:152px;width:425px;height:1px;background:#b9c5d1"></div><div style="position:absolute;left:4px;top:134px;height:18px;font:12px 'Liberation Sans', sans-serif;line-height:16px;letter-spacing:-0.3px;color:#000;white-space:nowrap;text-decoration:underline">P-108</div><div style="position:absolute;left:131px;top:134px;width:1px;height:19px;background:#b9c5d1"></div><div style="position:absolute;left:131px;top:134px;width:77px;height:18px;text-align:right;padding-right:5px;font:12px 'Liberation Sans', sans-serif;line-height:16px;letter-spacing:0.5px;color:#000;white-space:nowrap">0,00<span style="display:inline-block;width:5px"></span></div><div style="position:absolute;left:208px;top:134px;width:1px;height:19px;background:#b9c5d1"></div><div style="position:absolute;left:208px;top:134px;width:77px;height:18px;text-align:right;padding-right:5px;font:12px 'Liberation Sans', sans-serif;line-height:16px;letter-spacing:0.5px;color:#000;white-space:nowrap">0,00<span style="display:inline-block;width:5px"></span></div><div style="position:absolute;left:285px;top:134px;width:1px;height:19px;background:#b9c5d1"></div><div style="position:absolute;left:285px;top:134px;width:77px;height:18px;text-align:right;padding-right:5px;font:12px 'Liberation Sans', sans-serif;line-height:16px;letter-spacing:0.5px;color:#000;white-space:nowrap">0,00<span style="display:inline-block;width:5px"></span></div><div style="position:absolute;left:362px;top:134px;width:1px;height:19px;background:#b9c5d1"></div><div style="position:absolute;left:362px;top:134px;width:77px;height:18px;text-align:right;padding-right:5px;font:12px 'Liberation Sans', sans-serif;line-height:16px;letter-spacing:0.5px;color:#000;white-space:nowrap">0,00<span style="display:inline-block;width:5px"></span></div><div style="position:absolute;left:439px;top:134px;width:1px;height:19px;background:#b9c5d1"></div><div style="position:absolute;left:439px;top:134px;width:77px;height:18px;text-align:right;padding-right:5px;font:12px 'Liberation Sans', sans-serif;line-height:16px;letter-spacing:0.5px;color:#000;white-space:nowrap">0,00<span style="display:inline-block;width:5px"></span></div><div style="position:absolute;left:0;top:153px;width:425px;height:18px;background:#dfe9f4"></div><div style="position:absolute;left:0;top:171px;width:425px;height:1px;background:#b9c5d1"></div><div style="position:absolute;left:4px;top:153px;height:18px;font:12px 'Liberation Sans', sans-serif;line-height:16px;letter-spacing:-0.3px;color:#000;white-space:nowrap;text-decoration:underline">P-109</div><div style="position:absolute;left:131px;top:153px;width:1px;height:19px;background:#b9c5d1"></div><div style="position:absolute;left:131px;top:153px;width:77px;height:18px;text-align:right;padding-right:6px;font:12px 'Liberation Sans', sans-serif;line-height:16px;letter-spacing:0.5px;color:#000;white-space:nowrap">103.745,2<span style="display:inline-block;width:9px;height:10px;position:relative;letter-spacing:0"><i style="position:absolute;left:0px;top:11px;width:1px;height:1px;background:#000;box-shadow:0 0 0.6px 0.4px rgba(0,0,0,0.55)"></i><i style="position:absolute;left:3px;top:11px;width:1px;height:1px;background:#000;box-shadow:0 0 0.6px 0.4px rgba(0,0,0,0.55)"></i><i style="position:absolute;left:6px;top:11px;width:1px;height:1px;background:#000;box-shadow:0 0 0.6px 0.4px rgba(0,0,0,0.55)"></i></span></div><div style="position:absolute;left:208px;top:153px;width:1px;height:19px;background:#b9c5d1"></div><div style="position:absolute;left:208px;top:153px;width:77px;height:18px;text-align:right;padding-right:6px;font:12px 'Liberation Sans', sans-serif;line-height:16px;letter-spacing:0.5px;color:#000;white-space:nowrap">103.745,2<span style="display:inline-block;width:9px;height:10px;position:relative;letter-spacing:0"><i style="position:absolute;left:0px;top:11px;width:1px;height:1px;background:#000;box-shadow:0 0 0.6px 0.4px rgba(0,0,0,0.55)"></i><i style="position:absolute;left:3px;top:11px;width:1px;height:1px;background:#000;box-shadow:0 0 0.6px 0.4px rgba(0,0,0,0.55)"></i><i style="position:absolute;left:6px;top:11px;width:1px;height:1px;background:#000;box-shadow:0 0 0.6px 0.4px rgba(0,0,0,0.55)"></i></span></div><div style="position:absolute;left:285px;top:153px;width:1px;height:19px;background:#b9c5d1"></div><div style="position:absolute;left:285px;top:153px;width:77px;height:18px;text-align:right;padding-right:6px;font:12px 'Liberation Sans', sans-serif;line-height:16px;letter-spacing:0.5px;color:#000;white-space:nowrap">103.745,2<span style="display:inline-block;width:9px;height:10px;position:relative;letter-spacing:0"><i style="position:absolute;left:0px;top:11px;width:1px;height:1px;background:#000;box-shadow:0 0 0.6px 0.4px rgba(0,0,0,0.55)"></i><i style="position:absolute;left:3px;top:11px;width:1px;height:1px;background:#000;box-shadow:0 0 0.6px 0.4px rgba(0,0,0,0.55)"></i><i style="position:absolute;left:6px;top:11px;width:1px;height:1px;background:#000;box-shadow:0 0 0.6px 0.4px rgba(0,0,0,0.55)"></i></span></div><div style="position:absolute;left:362px;top:153px;width:1px;height:19px;background:#b9c5d1"></div><div style="position:absolute;left:362px;top:153px;width:77px;height:18px;text-align:right;padding-right:6px;font:12px 'Liberation Sans', sans-serif;line-height:16px;letter-spacing:0.5px;color:#000;white-space:nowrap">103.745,2<span style="display:inline-block;width:9px;height:10px;position:relative;letter-spacing:0"><i style="position:absolute;left:0px;top:11px;width:1px;height:1px;background:#000;box-shadow:0 0 0.6px 0.4px rgba(0,0,0,0.55)"></i><i style="position:absolute;left:3px;top:11px;width:1px;height:1px;background:#000;box-shadow:0 0 0.6px 0.4px rgba(0,0,0,0.55)"></i><i style="position:absolute;left:6px;top:11px;width:1px;height:1px;background:#000;box-shadow:0 0 0.6px 0.4px rgba(0,0,0,0.55)"></i></span></div><div style="position:absolute;left:439px;top:153px;width:1px;height:19px;background:#b9c5d1"></div><div style="position:absolute;left:439px;top:153px;width:77px;height:18px;text-align:right;padding-right:6px;font:12px 'Liberation Sans', sans-serif;line-height:16px;letter-spacing:0.5px;color:#000;white-space:nowrap">103.745,2<span style="display:inline-block;width:9px;height:10px;position:relative;letter-spacing:0"><i style="position:absolute;left:0px;top:11px;width:1px;height:1px;background:#000;box-shadow:0 0 0.6px 0.4px rgba(0,0,0,0.55)"></i><i style="position:absolute;left:3px;top:11px;width:1px;height:1px;background:#000;box-shadow:0 0 0.6px 0.4px rgba(0,0,0,0.55)"></i><i style="position:absolute;left:6px;top:11px;width:1px;height:1px;background:#000;box-shadow:0 0 0.6px 0.4px rgba(0,0,0,0.55)"></i></span></div><div style="position:absolute;left:0;top:172px;width:425px;height:18px;background:#dfe9f4"></div><div style="position:absolute;left:0;top:190px;width:425px;height:1px;background:#b9c5d1"></div><div style="position:absolute;left:4px;top:172px;height:18px;font:12px 'Liberation Sans', sans-serif;line-height:16px;letter-spacing:-0.3px;color:#000;white-space:nowrap;text-decoration:underline">P-110</div><div style="position:absolute;left:131px;top:172px;width:1px;height:19px;background:#b9c5d1"></div><div style="position:absolute;left:131px;top:172px;width:77px;height:18px;text-align:right;padding-right:5px;font:12px 'Liberation Sans', sans-serif;line-height:16px;letter-spacing:0.5px;color:#000;white-space:nowrap">15.201,85<span style="display:inline-block;width:5px"></span></div><div style="position:absolute;left:208px;top:172px;width:1px;height:19px;background:#b9c5d1"></div><div style="position:absolute;left:208px;top:172px;width:77px;height:18px;text-align:right;padding-right:5px;font:12px 'Liberation Sans', sans-serif;line-height:16px;letter-spacing:0.5px;color:#000;white-space:nowrap">15.201,85<span style="display:inline-block;width:5px"></span></div><div style="position:absolute;left:285px;top:172px;width:1px;height:19px;background:#b9c5d1"></div><div style="position:absolute;left:285px;top:172px;width:77px;height:18px;text-align:right;padding-right:5px;font:12px 'Liberation Sans', sans-serif;line-height:16px;letter-spacing:0.5px;color:#000;white-space:nowrap">15.201,85<span style="display:inline-block;width:5px"></span></div><div style="position:absolute;left:362px;top:172px;width:1px;height:19px;background:#b9c5d1"></div><div style="position:absolute;left:362px;top:172px;width:77px;height:18px;text-align:right;padding-right:5px;font:12px 'Liberation Sans', sans-serif;line-height:16px;letter-spacing:0.5px;color:#000;white-space:nowrap">15.201,85<span style="display:inline-block;width:5px"></span></div><div style="position:absolute;left:439px;top:172px;width:1px;height:19px;background:#b9c5d1"></div><div style="position:absolute;left:439px;top:172px;width:77px;height:18px;text-align:right;padding-right:5px;font:12px 'Liberation Sans', sans-serif;line-height:16px;letter-spacing:0.5px;color:#000;white-space:nowrap">15.201,85<span style="display:inline-block;width:5px"></span></div><div style="position:absolute;left:0;top:191px;width:425px;height:18px;background:#dfe9f4"></div><div style="position:absolute;left:0;top:209px;width:425px;height:1px;background:#b9c5d1"></div><div style="position:absolute;left:4px;top:191px;height:18px;font:12px 'Liberation Sans', sans-serif;line-height:16px;letter-spacing:-0.3px;color:#000;white-space:nowrap;text-decoration:underline">P-112</div><div style="position:absolute;left:131px;top:191px;width:1px;height:19px;background:#b9c5d1"></div><div style="position:absolute;left:131px;top:191px;width:77px;height:18px;text-align:right;padding-right:5px;font:12px 'Liberation Sans', sans-serif;line-height:16px;letter-spacing:0.5px;color:#000;white-space:nowrap">0,00<span style="display:inline-block;width:5px"></span></div><div style="position:absolute;left:208px;top:191px;width:1px;height:19px;background:#b9c5d1"></div><div style="position:absolute;left:208px;top:191px;width:77px;height:18px;text-align:right;padding-right:5px;font:12px 'Liberation Sans', sans-serif;line-height:16px;letter-spacing:0.5px;color:#000;white-space:nowrap">0,00<span style="display:inline-block;width:5px"></span></div><div style="position:absolute;left:285px;top:191px;width:1px;height:19px;background:#b9c5d1"></div><div style="position:absolute;left:285px;top:191px;width:77px;height:18px;text-align:right;padding-right:5px;font:12px 'Liberation Sans', sans-serif;line-height:16px;letter-spacing:0.5px;color:#000;white-space:nowrap">0,00<span style="display:inline-block;width:5px"></span></div><div style="position:absolute;left:362px;top:191px;width:1px;height:19px;background:#b9c5d1"></div><div style="position:absolute;left:362px;top:191px;width:77px;height:18px;text-align:right;padding-right:5px;font:12px 'Liberation Sans', sans-serif;line-height:16px;letter-spacing:0.5px;color:#000;white-space:nowrap">0,00<span style="display:inline-block;width:5px"></span></div><div style="position:absolute;left:439px;top:191px;width:1px;height:19px;background:#b9c5d1"></div><div style="position:absolute;left:439px;top:191px;width:77px;height:18px;text-align:right;padding-right:5px;font:12px 'Liberation Sans', sans-serif;line-height:16px;letter-spacing:0.5px;color:#000;white-space:nowrap">0,00<span style="display:inline-block;width:5px"></span></div></div>
<div style="position:absolute;left:9px;top:298px;width:425px;height:1px;background:#c3d0dc"></div>
<div style="position:absolute;left:466px;top:101px;width:425px;height:197px;overflow:hidden"><div style="position:absolute;left:0;top:0;width:425px;height:1px;background:#d2e0ee"></div><div style="position:absolute;left:0;top:1px;width:425px;height:18px;background:linear-gradient(#eeeff1,#e1e4e8 30%,#d9dde2 70%,#d2d7dd)"></div><div style="position:absolute;left:0;top:19px;width:425px;height:1px;background:#b6c0ca"></div><div style="position:absolute;left:0px;top:0;width:75px;height:19px;text-align:right;padding-right:9px;font:12px 'Liberation Sans', sans-serif;line-height:23px;letter-spacing:0.35px;color:#000;white-space:nowrap;overflow:hidden">04.2012</div><div style="position:absolute;left:75px;top:0;width:77px;height:19px;text-align:right;padding-right:9px;font:12px 'Liberation Sans', sans-serif;line-height:23px;letter-spacing:0.35px;color:#000;white-space:nowrap;overflow:hidden">05.2012</div><div style="position:absolute;left:75px;top:1px;width:1px;height:18px;background:#aab3bd;box-shadow:1px 0 0 #f4f6f8"></div><div style="position:absolute;left:152px;top:0;width:77px;height:19px;text-align:right;padding-right:9px;font:12px 'Liberation Sans', sans-serif;line-height:23px;letter-spacing:0.35px;color:#000;white-space:nowrap;overflow:hidden">06.2012</div><div style="position:absolute;left:152px;top:1px;width:1px;height:18px;background:#aab3bd;box-shadow:1px 0 0 #f4f6f8"></div><div style="position:absolute;left:229px;top:0;width:77px;height:19px;text-align:right;padding-right:9px;font:12px 'Liberation Sans', sans-serif;line-height:23px;letter-spacing:0.35px;color:#000;white-space:nowrap;overflow:hidden">07.2012</div><div style="position:absolute;left:229px;top:1px;width:1px;height:18px;background:#aab3bd;box-shadow:1px 0 0 #f4f6f8"></div><div style="position:absolute;left:306px;top:0;width:77px;height:19px;text-align:right;padding-right:9px;font:12px 'Liberation Sans', sans-serif;line-height:23px;letter-spacing:0.35px;color:#000;white-space:nowrap;overflow:hidden">08.2012</div><div style="position:absolute;left:306px;top:1px;width:1px;height:18px;background:#aab3bd;box-shadow:1px 0 0 #f4f6f8"></div><div style="position:absolute;left:383px;top:0;width:77px;height:19px;text-align:right;padding-right:9px;font:12px 'Liberation Sans', sans-serif;line-height:23px;letter-spacing:0.35px;color:#000;white-space:nowrap;overflow:hidden">09.2012</div><div style="position:absolute;left:383px;top:1px;width:1px;height:18px;background:#aab3bd;box-shadow:1px 0 0 #f4f6f8"></div><div style="position:absolute;left:0;top:20px;width:425px;height:18px;background:#dfe9f4"></div><div style="position:absolute;left:0;top:38px;width:425px;height:1px;background:#b9c5d1"></div><div style="position:absolute;left:0px;top:20px;width:75px;height:18px;text-align:right;padding-right:5px;font:12px 'Liberation Sans', sans-serif;line-height:16px;letter-spacing:0.5px;color:#000;white-space:nowrap">0,00<span style="display:inline-block;width:5px"></span></div><div style="position:absolute;left:75px;top:20px;width:1px;height:19px;background:#b9c5d1"></div><div style="position:absolute;left:75px;top:20px;width:77px;height:18px;text-align:right;padding-right:5px;font:12px 'Liberation Sans', sans-serif;line-height:16px;letter-spacing:0.5px;color:#000;white-space:nowrap">0,00<span style="display:inline-block;width:5px"></span></div><div style="position:absolute;left:152px;top:20px;width:1px;height:19px;background:#b9c5d1"></div><div style="position:absolute;left:152px;top:20px;width:77px;height:18px;text-align:right;padding-right:5px;font:12px 'Liberation Sans', sans-serif;line-height:16px;letter-spacing:0.5px;color:#000;white-space:nowrap">0,00<span style="display:inline-block;width:5px"></span></div><div style="position:absolute;left:229px;top:20px;width:1px;height:19px;background:#b9c5d1"></div><div style="position:absolute;left:229px;top:20px;width:77px;height:18px;text-align:right;padding-right:5px;font:12px 'Liberation Sans', sans-serif;line-height:16px;letter-spacing:0.5px;color:#000;white-space:nowrap">0,00<span style="display:inline-block;width:5px"></span></div><div style="position:absolute;left:306px;top:20px;width:1px;height:19px;background:#b9c5d1"></div><div style="position:absolute;left:306px;top:20px;width:77px;height:18px;text-align:right;padding-right:5px;font:12px 'Liberation Sans', sans-serif;line-height:16px;letter-spacing:0.5px;color:#000;white-space:nowrap">0,00<span style="display:inline-block;width:5px"></span></div><div style="position:absolute;left:383px;top:20px;width:1px;height:19px;background:#b9c5d1"></div><div style="position:absolute;left:0;top:39px;width:425px;height:18px;background:#dfe9f4"></div><div style="position:absolute;left:0;top:57px;width:425px;height:1px;background:#b9c5d1"></div><div style="position:absolute;left:0px;top:39px;width:75px;height:18px;text-align:right;padding-right:5px;font:12px 'Liberation Sans', sans-serif;line-height:16px;letter-spacing:0.5px;color:#000;white-space:nowrap">0,00<span style="display:inline-block;width:5px"></span></div><div style="position:absolute;left:75px;top:39px;width:1px;height:19px;background:#b9c5d1"></div><div style="position:absolute;left:75px;top:39px;width:77px;height:18px;text-align:right;padding-right:5px;font:12px 'Liberation Sans', sans-serif;line-height:16px;letter-spacing:0.5px;color:#000;white-space:nowrap">0,00<span style="display:inline-block;width:5px"></span></div><div style="position:absolute;left:152px;top:39px;width:1px;height:19px;background:#b9c5d1"></div><div style="position:absolute;left:152px;top:39px;width:77px;height:18px;text-align:right;padding-right:5px;font:12px 'Liberation Sans', sans-serif;line-height:16px;letter-spacing:0.5px;color:#000;white-space:nowrap">0,00<span style="display:inline-block;width:5px"></span></div><div style="position:absolute;left:229px;top:39px;width:1px;height:19px;background:#b9c5d1"></div><div style="position:absolute;left:229px;top:39px;width:77px;height:18px;text-align:right;padding-right:5px;font:12px 'Liberation Sans', sans-serif;line-height:16px;letter-spacing:0.5px;color:#000;white-space:nowrap">0,00<span style="display:inline-block;width:5px"></span></div><div style="position:absolute;left:306px;top:39px;width:1px;height:19px;background:#b9c5d1"></div><div style="position:absolute;left:306px;top:39px;width:77px;height:18px;text-align:right;padding-right:5px;font:12px 'Liberation Sans', sans-serif;line-height:16px;letter-spacing:0.5px;color:#000;white-space:nowrap">0,00<span style="display:inline-block;width:5px"></span></div><div style="position:absolute;left:383px;top:39px;width:1px;height:19px;background:#b9c5d1"></div><div style="position:absolute;left:0;top:58px;width:425px;height:18px;background:#dfe9f4"></div><div style="position:absolute;left:0;top:76px;width:425px;height:1px;background:#b9c5d1"></div><div style="position:absolute;left:0px;top:58px;width:75px;height:18px;text-align:right;padding-right:5px;font:12px 'Liberation Sans', sans-serif;line-height:16px;letter-spacing:0.5px;color:#000;white-space:nowrap">0,00<span style="display:inline-block;width:5px"></span></div><div style="position:absolute;left:75px;top:58px;width:1px;height:19px;background:#b9c5d1"></div><div style="position:absolute;left:75px;top:58px;width:77px;height:18px;text-align:right;padding-right:5px;font:12px 'Liberation Sans', sans-serif;line-height:16px;letter-spacing:0.5px;color:#000;white-space:nowrap">0,00<span style="display:inline-block;width:5px"></span></div><div style="position:absolute;left:152px;top:58px;width:1px;height:19px;background:#b9c5d1"></div><div style="position:absolute;left:152px;top:58px;width:77px;height:18px;text-align:right;padding-right:5px;font:12px 'Liberation Sans', sans-serif;line-height:16px;letter-spacing:0.5px;color:#000;white-space:nowrap">0,00<span style="display:inline-block;width:5px"></span></div><div style="position:absolute;left:229px;top:58px;width:1px;height:19px;background:#b9c5d1"></div><div style="position:absolute;left:229px;top:58px;width:77px;height:18px;text-align:right;padding-right:5px;font:12px 'Liberation Sans', sans-serif;line-height:16px;letter-spacing:0.5px;color:#000;white-space:nowrap">0,00<span style="display:inline-block;width:5px"></span></div><div style="position:absolute;left:306px;top:58px;width:1px;height:19px;background:#b9c5d1"></div><div style="position:absolute;left:306px;top:58px;width:77px;height:18px;text-align:right;padding-right:5px;font:12px 'Liberation Sans', sans-serif;line-height:16px;letter-spacing:0.5px;color:#000;white-space:nowrap">0,00<span style="display:inline-block;width:5px"></span></div><div style="position:absolute;left:383px;top:58px;width:1px;height:19px;background:#b9c5d1"></div><div style="position:absolute;left:0;top:77px;width:425px;height:18px;background:#dfe9f4"></div><div style="position:absolute;left:0;top:95px;width:425px;height:1px;background:#b9c5d1"></div><div style="position:absolute;left:0px;top:77px;width:75px;height:18px;text-align:right;padding-right:5px;font:12px 'Liberation Sans', sans-serif;line-height:16px;letter-spacing:0.5px;color:#000;white-space:nowrap">0,00<span style="display:inline-block;width:5px"></span></div><div style="position:absolute;left:75px;top:77px;width:1px;height:19px;background:#b9c5d1"></div><div style="position:absolute;left:75px;top:77px;width:77px;height:18px;text-align:right;padding-right:5px;font:12px 'Liberation Sans', sans-serif;line-height:16px;letter-spacing:0.5px;color:#000;white-space:nowrap">0,00<span style="display:inline-block;width:5px"></span></div><div style="position:absolute;left:152px;top:77px;width:1px;height:19px;background:#b9c5d1"></div><div style="position:absolute;left:152px;top:77px;width:77px;height:18px;text-align:right;padding-right:5px;font:12px 'Liberation Sans', sans-serif;line-height:16px;letter-spacing:0.5px;color:#000;white-space:nowrap">0,00<span style="display:inline-block;width:5px"></span></div><div style="position:absolute;left:229px;top:77px;width:1px;height:19px;background:#b9c5d1"></div><div style="position:absolute;left:229px;top:77px;width:77px;height:18px;text-align:right;padding-right:5px;font:12px 'Liberation Sans', sans-serif;line-height:16px;letter-spacing:0.5px;color:#000;white-space:nowrap">0,00<span style="display:inline-block;width:5px"></span></div><div style="position:absolute;left:306px;top:77px;width:1px;height:19px;background:#b9c5d1"></div><div style="position:absolute;left:306px;top:77px;width:77px;height:18px;text-align:right;padding-right:5px;font:12px 'Liberation Sans', sans-serif;line-height:16px;letter-spacing:0.5px;color:#000;white-space:nowrap">0,00<span style="display:inline-block;width:5px"></span></div><div style="position:absolute;left:383px;top:77px;width:1px;height:19px;background:#b9c5d1"></div><div style="position:absolute;left:0;top:96px;width:425px;height:18px;background:#dfe9f4"></div><div style="position:absolute;left:0;top:114px;width:425px;height:1px;background:#b9c5d1"></div><div style="position:absolute;left:0px;top:96px;width:75px;height:18px;text-align:right;padding-right:5px;font:12px 'Liberation Sans', sans-serif;line-height:16px;letter-spacing:0.5px;color:#000;white-space:nowrap">31.920,00<span style="display:inline-block;width:5px"></span></div><div style="position:absolute;left:75px;top:96px;width:1px;height:19px;background:#b9c5d1"></div><div style="position:absolute;left:75px;top:96px;width:77px;height:18px;text-align:right;padding-right:5px;font:12px 'Liberation Sans', sans-serif;line-height:16px;letter-spacing:0.5px;color:#000;white-space:nowrap">0,00<span style="display:inline-block;width:5px"></span></div><div style="position:absolute;left:152px;top:96px;width:1px;height:19px;background:#b9c5d1"></div><div style="position:absolute;left:152px;top:96px;width:77px;height:18px;text-align:right;padding-right:5px;font:12px 'Liberation Sans', sans-serif;line-height:16px;letter-spacing:0.5px;color:#000;white-space:nowrap">0,00<span style="display:inline-block;width:5px"></span></div><div style="position:absolute;left:229px;top:96px;width:1px;height:19px;background:#b9c5d1"></div><div style="position:absolute;left:229px;top:96px;width:77px;height:18px;text-align:right;padding-right:5px;font:12px 'Liberation Sans', sans-serif;line-height:16px;letter-spacing:0.5px;color:#000;white-space:nowrap">12.000,00<span style="display:inline-block;width:5px"></span></div><div style="position:absolute;left:306px;top:96px;width:1px;height:19px;background:#b9c5d1"></div><div style="position:absolute;left:306px;top:96px;width:77px;height:18px;text-align:right;padding-right:5px;font:12px 'Liberation Sans', sans-serif;line-height:16px;letter-spacing:0.5px;color:#000;white-space:nowrap">0,00<span style="display:inline-block;width:5px"></span></div><div style="position:absolute;left:383px;top:96px;width:1px;height:19px;background:#b9c5d1"></div><div style="position:absolute;left:0;top:115px;width:425px;height:18px;background:#dfe9f4"></div><div style="position:absolute;left:0;top:133px;width:425px;height:1px;background:#b9c5d1"></div><div style="position:absolute;left:0px;top:115px;width:75px;height:18px;text-align:right;padding-right:5px;font:12px 'Liberation Sans', sans-serif;line-height:16px;letter-spacing:0.5px;color:#000;white-space:nowrap">0,00<span style="display:inline-block;width:5px"></span></div><div style="position:absolute;left:75px;top:115px;width:1px;height:19px;background:#b9c5d1"></div><div style="position:absolute;left:75px;top:115px;width:77px;height:18px;text-align:right;padding-right:5px;font:12px 'Liberation Sans', sans-serif;line-height:16px;letter-spacing:0.5px;color:#000;white-space:nowrap">0,00<span style="display:inline-block;width:5px"></span></div><div style="position:absolute;left:152px;top:115px;width:1px;height:19px;background:#b9c5d1"></div><div style="position:absolute;left:152px;top:115px;width:77px;height:18px;text-align:right;padding-right:5px;font:12px 'Liberation Sans', sans-serif;line-height:16px;letter-spacing:0.5px;color:#000;white-space:nowrap">0,00<span style="display:inline-block;width:5px"></span></div><div style="position:absolute;left:229px;top:115px;width:1px;height:19px;background:#b9c5d1"></div><div style="position:absolute;left:229px;top:115px;width:77px;height:18px;text-align:right;padding-right:5px;font:12px 'Liberation Sans', sans-serif;line-height:16px;letter-spacing:0.5px;color:#000;white-space:nowrap">0,00<span style="display:inline-block;width:5px"></span></div><div style="position:absolute;left:306px;top:115px;width:1px;height:19px;background:#b9c5d1"></div><div style="position:absolute;left:306px;top:115px;width:77px;height:18px;text-align:right;padding-right:5px;font:12px 'Liberation Sans', sans-serif;line-height:16px;letter-spacing:0.5px;color:#000;white-space:nowrap">0,00<span style="display:inline-block;width:5px"></span></div><div style="position:absolute;left:383px;top:115px;width:1px;height:19px;background:#b9c5d1"></div><div style="position:absolute;left:0;top:134px;width:425px;height:18px;background:#dfe9f4"></div><div style="position:absolute;left:0;top:152px;width:425px;height:1px;background:#b9c5d1"></div><div style="position:absolute;left:0px;top:134px;width:75px;height:18px;text-align:right;padding-right:5px;font:12px 'Liberation Sans', sans-serif;line-height:16px;letter-spacing:0.5px;color:#000;white-space:nowrap">0,00<span style="display:inline-block;width:5px"></span></div><div style="position:absolute;left:75px;top:134px;width:1px;height:19px;background:#b9c5d1"></div><div style="position:absolute;left:75px;top:134px;width:77px;height:18px;text-align:right;padding-right:5px;font:12px 'Liberation Sans', sans-serif;line-height:16px;letter-spacing:0.5px;color:#000;white-space:nowrap">0,00<span style="display:inline-block;width:5px"></span></div><div style="position:absolute;left:152px;top:134px;width:1px;height:19px;background:#b9c5d1"></div><div style="position:absolute;left:152px;top:134px;width:77px;height:18px;text-align:right;padding-right:5px;font:12px 'Liberation Sans', sans-serif;line-height:16px;letter-spacing:0.5px;color:#000;white-space:nowrap">0,00<span style="display:inline-block;width:5px"></span></div><div style="position:absolute;left:229px;top:134px;width:1px;height:19px;background:#b9c5d1"></div><div style="position:absolute;left:229px;top:134px;width:77px;height:18px;text-align:right;padding-right:5px;font:12px 'Liberation Sans', sans-serif;line-height:16px;letter-spacing:0.5px;color:#000;white-space:nowrap">0,00<span style="display:inline-block;width:5px"></span></div><div style="position:absolute;left:306px;top:134px;width:1px;height:19px;background:#b9c5d1"></div><div style="position:absolute;left:306px;top:134px;width:77px;height:18px;text-align:right;padding-right:5px;font:12px 'Liberation Sans', sans-serif;line-height:16px;letter-spacing:0.5px;color:#000;white-space:nowrap">0,00<span style="display:inline-block;width:5px"></span></div><div style="position:absolute;left:383px;top:134px;width:1px;height:19px;background:#b9c5d1"></div><div style="position:absolute;left:0;top:153px;width:425px;height:18px;background:#dfe9f4"></div><div style="position:absolute;left:0;top:171px;width:425px;height:1px;background:#b9c5d1"></div><div style="position:absolute;left:0px;top:153px;width:75px;height:18px;text-align:right;padding-right:5px;font:12px 'Liberation Sans', sans-serif;line-height:16px;letter-spacing:0.5px;color:#000;white-space:nowrap">0,00<span style="display:inline-block;width:5px"></span></div><div style="position:absolute;left:75px;top:153px;width:1px;height:19px;background:#b9c5d1"></div><div style="position:absolute;left:75px;top:153px;width:77px;height:18px;text-align:right;padding-right:5px;font:12px 'Liberation Sans', sans-serif;line-height:16px;letter-spacing:0.5px;color:#000;white-space:nowrap">0,00<span style="display:inline-block;width:5px"></span></div><div style="position:absolute;left:152px;top:153px;width:1px;height:19px;background:#b9c5d1"></div><div style="position:absolute;left:152px;top:153px;width:77px;height:18px;text-align:right;padding-right:5px;font:12px 'Liberation Sans', sans-serif;line-height:16px;letter-spacing:0.5px;color:#000;white-space:nowrap">0,00<span style="display:inline-block;width:5px"></span></div><div style="position:absolute;left:229px;top:153px;width:1px;height:19px;background:#b9c5d1"></div><div style="position:absolute;left:229px;top:153px;width:77px;height:18px;text-align:right;padding-right:5px;font:12px 'Liberation Sans', sans-serif;line-height:16px;letter-spacing:0.5px;color:#000;white-space:nowrap">0,00<span style="display:inline-block;width:5px"></span></div><div style="position:absolute;left:306px;top:153px;width:1px;height:19px;background:#b9c5d1"></div><div style="position:absolute;left:306px;top:153px;width:77px;height:18px;text-align:right;padding-right:5px;font:12px 'Liberation Sans', sans-serif;line-height:16px;letter-spacing:0.5px;color:#000;white-space:nowrap">0,00<span style="display:inline-block;width:5px"></span></div><div style="position:absolute;left:383px;top:153px;width:1px;height:19px;background:#b9c5d1"></div><div style="position:absolute;left:0;top:172px;width:425px;height:18px;background:#dfe9f4"></div><div style="position:absolute;left:0;top:190px;width:425px;height:1px;background:#b9c5d1"></div><div style="position:absolute;left:0px;top:172px;width:75px;height:18px;text-align:right;padding-right:5px;font:12px 'Liberation Sans', sans-serif;line-height:16px;letter-spacing:0.5px;color:#000;white-space:nowrap">0,00<span style="display:inline-block;width:5px"></span></div><div style="position:absolute;left:75px;top:172px;width:1px;height:19px;background:#b9c5d1"></div><div style="position:absolute;left:75px;top:172px;width:77px;height:18px;text-align:right;padding-right:5px;font:12px 'Liberation Sans', sans-serif;line-height:16px;letter-spacing:0.5px;color:#000;white-space:nowrap">0,00<span style="display:inline-block;width:5px"></span></div><div style="position:absolute;left:152px;top:172px;width:1px;height:19px;background:#b9c5d1"></div><div style="position:absolute;left:152px;top:172px;width:77px;height:18px;text-align:right;padding-right:5px;font:12px 'Liberation Sans', sans-serif;line-height:16px;letter-spacing:0.5px;color:#000;white-space:nowrap">0,00<span style="display:inline-block;width:5px"></span></div><div style="position:absolute;left:229px;top:172px;width:1px;height:19px;background:#b9c5d1"></div><div style="position:absolute;left:229px;top:172px;width:77px;height:18px;text-align:right;padding-right:5px;font:12px 'Liberation Sans', sans-serif;line-height:16px;letter-spacing:0.5px;color:#000;white-space:nowrap">0,00<span style="display:inline-block;width:5px"></span></div><div style="position:absolute;left:306px;top:172px;width:1px;height:19px;background:#b9c5d1"></div><div style="position:absolute;left:306px;top:172px;width:77px;height:18px;text-align:right;padding-right:5px;font:12px 'Liberation Sans', sans-serif;line-height:16px;letter-spacing:0.5px;color:#000;white-space:nowrap">0,00<span style="display:inline-block;width:5px"></span></div><div style="position:absolute;left:383px;top:172px;width:1px;height:19px;background:#b9c5d1"></div><div style="position:absolute;left:0;top:191px;width:425px;height:18px;background:#dfe9f4"></div><div style="position:absolute;left:0;top:209px;width:425px;height:1px;background:#b9c5d1"></div><div style="position:absolute;left:0px;top:191px;width:75px;height:18px;text-align:right;padding-right:5px;font:12px 'Liberation Sans', sans-serif;line-height:16px;letter-spacing:0.5px;color:#000;white-space:nowrap">0,00<span style="display:inline-block;width:5px"></span></div><div style="position:absolute;left:75px;top:191px;width:1px;height:19px;background:#b9c5d1"></div><div style="position:absolute;left:75px;top:191px;width:77px;height:18px;text-align:right;padding-right:5px;font:12px 'Liberation Sans', sans-serif;line-height:16px;letter-spacing:0.5px;color:#000;white-space:nowrap">0,00<span style="display:inline-block;width:5px"></span></div><div style="position:absolute;left:152px;top:191px;width:1px;height:19px;background:#b9c5d1"></div><div style="position:absolute;left:152px;top:191px;width:77px;height:18px;text-align:right;padding-right:5px;font:12px 'Liberation Sans', sans-serif;line-height:16px;letter-spacing:0.5px;color:#000;white-space:nowrap">0,00<span style="display:inline-block;width:5px"></span></div><div style="position:absolute;left:229px;top:191px;width:1px;height:19px;background:#b9c5d1"></div><div style="position:absolute;left:229px;top:191px;width:77px;height:18px;text-align:right;padding-right:5px;font:12px 'Liberation Sans', sans-serif;line-height:16px;letter-spacing:0.5px;color:#000;white-space:nowrap">0,00<span style="display:inline-block;width:5px"></span></div><div style="position:absolute;left:306px;top:191px;width:1px;height:19px;background:#b9c5d1"></div><div style="position:absolute;left:306px;top:191px;width:77px;height:18px;text-align:right;padding-right:5px;font:12px 'Liberation Sans', sans-serif;line-height:16px;letter-spacing:0.5px;color:#000;white-space:nowrap">0,00<span style="display:inline-block;width:5px"></span></div><div style="position:absolute;left:383px;top:191px;width:1px;height:19px;background:#b9c5d1"></div></div>
<div style="position:absolute;left:466px;top:298px;width:425px;height:1px;background:#c3d0dc"></div>
<div style="position:absolute;left:923px;top:101px;width:424px;height:197px;overflow:hidden"><div style="position:absolute;left:0;top:0;width:424px;height:1px;background:#d2e0ee"></div><div style="position:absolute;left:0;top:1px;width:424px;height:18px;background:linear-gradient(#eeeff1,#e1e4e8 30%,#d9dde2 70%,#d2d7dd)"></div><div style="position:absolute;left:0;top:19px;width:424px;height:1px;background:#b6c0ca"></div><div style="position:absolute;left:0px;top:0;width:75px;height:19px;text-align:right;padding-right:9px;font:12px 'Liberation Sans', sans-serif;line-height:23px;letter-spacing:0.35px;color:#000;white-space:nowrap;overflow:hidden">04.2012</div><div style="position:absolute;left:75px;top:0;width:77px;height:19px;text-align:right;padding-right:9px;font:12px 'Liberation Sans', sans-serif;line-height:23px;letter-spacing:0.35px;color:#000;white-space:nowrap;overflow:hidden">05.2012</div><div style="position:absolute;left:75px;top:1px;width:1px;height:18px;background:#aab3bd;box-shadow:1px 0 0 #f4f6f8"></div><div style="position:absolute;left:152px;top:0;width:77px;height:19px;text-align:right;padding-right:9px;font:12px 'Liberation Sans', sans-serif;line-height:23px;letter-spacing:0.35px;color:#000;white-space:nowrap;overflow:hidden">06.2012</div><div style="position:absolute;left:152px;top:1px;width:1px;height:18px;background:#aab3bd;box-shadow:1px 0 0 #f4f6f8"></div><div style="position:absolute;left:229px;top:0;width:77px;height:19px;text-align:right;padding-right:9px;font:12px 'Liberation Sans', sans-serif;line-height:23px;letter-spacing:0.35px;color:#000;white-space:nowrap;overflow:hidden">07.2012</div><div style="position:absolute;left:229px;top:1px;width:1px;height:18px;background:#aab3bd;box-shadow:1px 0 0 #f4f6f8"></div><div style="position:absolute;left:306px;top:0;width:77px;height:19px;text-align:right;padding-right:9px;font:12px 'Liberation Sans', sans-serif;line-height:23px;letter-spacing:0.35px;color:#000;white-space:nowrap;overflow:hidden">08.2012</div><div style="position:absolute;left:306px;top:1px;width:1px;height:18px;background:#aab3bd;box-shadow:1px 0 0 #f4f6f8"></div><div style="position:absolute;left:383px;top:0;width:77px;height:19px;text-align:right;padding-right:9px;font:12px 'Liberation Sans', sans-serif;line-height:23px;letter-spacing:0.35px;color:#000;white-space:nowrap;overflow:hidden">09.2012</div><div style="position:absolute;left:383px;top:1px;width:1px;height:18px;background:#aab3bd;box-shadow:1px 0 0 #f4f6f8"></div><div style="position:absolute;left:0;top:20px;width:424px;height:18px;background:#dfe9f4"></div><div style="position:absolute;left:0;top:38px;width:424px;height:1px;background:#b9c5d1"></div><div style="position:absolute;left:0px;top:20px;width:75px;height:18px;text-align:right;padding-right:5px;font:12px 'Liberation Sans', sans-serif;line-height:16px;letter-spacing:0.5px;color:#000;white-space:nowrap">5.169,78<span style="display:inline-block;width:5px;text-align:left;letter-spacing:0">-</span></div><div style="position:absolute;left:75px;top:20px;width:1px;height:19px;background:#b9c5d1"></div><div style="position:absolute;left:75px;top:20px;width:77px;height:18px;text-align:right;padding-right:5px;font:12px 'Liberation Sans', sans-serif;line-height:16px;letter-spacing:0.5px;color:#000;white-space:nowrap">574,42<span style="display:inline-block;width:5px;text-align:left;letter-spacing:0">-</span></div><div style="position:absolute;left:152px;top:20px;width:1px;height:19px;background:#b9c5d1"></div><div style="position:absolute;left:152px;top:20px;width:77px;height:18px;text-align:right;padding-right:5px;font:12px 'Liberation Sans', sans-serif;line-height:16px;letter-spacing:0.5px;color:#000;white-space:nowrap">0,00<span style="display:inline-block;width:5px"></span></div><div style="position:absolute;left:229px;top:20px;width:1px;height:19px;background:#b9c5d1"></div><div style="position:absolute;left:229px;top:20px;width:77px;height:18px;text-align:right;padding-right:5px;font:12px 'Liberation Sans', sans-serif;line-height:16px;letter-spacing:0.5px;color:#000;white-space:nowrap">0,00<span style="display:inline-block;width:5px"></span></div><div style="position:absolute;left:306px;top:20px;width:1px;height:19px;background:#b9c5d1"></div><div style="position:absolute;left:306px;top:20px;width:77px;height:18px;text-align:right;padding-right:5px;font:12px 'Liberation Sans', sans-serif;line-height:16px;letter-spacing:0.5px;color:#000;white-space:nowrap">0,00<span style="display:inline-block;width:5px"></span></div><div style="position:absolute;left:383px;top:20px;width:1px;height:19px;background:#b9c5d1"></div><div style="position:absolute;left:0;top:39px;width:424px;height:18px;background:#dfe9f4"></div><div style="position:absolute;left:0;top:57px;width:424px;height:1px;background:#b9c5d1"></div><div style="position:absolute;left:0px;top:39px;width:75px;height:18px;text-align:right;padding-right:5px;font:12px 'Liberation Sans', sans-serif;line-height:16px;letter-spacing:0.5px;color:#000;white-space:nowrap">2.488,77<span style="display:inline-block;width:5px;text-align:left;letter-spacing:0">-</span></div><div style="position:absolute;left:75px;top:39px;width:1px;height:19px;background:#b9c5d1"></div><div style="position:absolute;left:75px;top:39px;width:77px;height:18px;text-align:right;padding-right:5px;font:12px 'Liberation Sans', sans-serif;line-height:16px;letter-spacing:0.5px;color:#000;white-space:nowrap">0,00<span style="display:inline-block;width:5px"></span></div><div style="position:absolute;left:152px;top:39px;width:1px;height:19px;background:#b9c5d1"></div><div style="position:absolute;left:152px;top:39px;width:77px;height:18px;text-align:right;padding-right:5px;font:12px 'Liberation Sans', sans-serif;line-height:16px;letter-spacing:0.5px;color:#000;white-space:nowrap">0,00<span style="display:inline-block;width:5px"></span></div><div style="position:absolute;left:229px;top:39px;width:1px;height:19px;background:#b9c5d1"></div><div style="position:absolute;left:229px;top:39px;width:77px;height:18px;text-align:right;padding-right:5px;font:12px 'Liberation Sans', sans-serif;line-height:16px;letter-spacing:0.5px;color:#000;white-space:nowrap">0,00<span style="display:inline-block;width:5px"></span></div><div style="position:absolute;left:306px;top:39px;width:1px;height:19px;background:#b9c5d1"></div><div style="position:absolute;left:306px;top:39px;width:77px;height:18px;text-align:right;padding-right:5px;font:12px 'Liberation Sans', sans-serif;line-height:16px;letter-spacing:0.5px;color:#000;white-space:nowrap">0,00<span style="display:inline-block;width:5px"></span></div><div style="position:absolute;left:383px;top:39px;width:1px;height:19px;background:#b9c5d1"></div><div style="position:absolute;left:0;top:58px;width:424px;height:18px;background:#dfe9f4"></div><div style="position:absolute;left:0;top:76px;width:424px;height:1px;background:#b9c5d1"></div><div style="position:absolute;left:0px;top:58px;width:75px;height:18px;text-align:right;padding-right:5px;font:12px 'Liberation Sans', sans-serif;line-height:16px;letter-spacing:0.5px;color:#000;white-space:nowrap">0,00<span style="display:inline-block;width:5px"></span></div><div style="position:absolute;left:75px;top:58px;width:1px;height:19px;background:#b9c5d1"></div><div style="position:absolute;left:75px;top:58px;width:77px;height:18px;text-align:right;padding-right:5px;font:12px 'Liberation Sans', sans-serif;line-height:16px;letter-spacing:0.5px;color:#000;white-space:nowrap">0,00<span style="display:inline-block;width:5px"></span></div><div style="position:absolute;left:152px;top:58px;width:1px;height:19px;background:#b9c5d1"></div><div style="position:absolute;left:152px;top:58px;width:77px;height:18px;text-align:right;padding-right:5px;font:12px 'Liberation Sans', sans-serif;line-height:16px;letter-spacing:0.5px;color:#000;white-space:nowrap">0,00<span style="display:inline-block;width:5px"></span></div><div style="position:absolute;left:229px;top:58px;width:1px;height:19px;background:#b9c5d1"></div><div style="position:absolute;left:229px;top:58px;width:77px;height:18px;text-align:right;padding-right:5px;font:12px 'Liberation Sans', sans-serif;line-height:16px;letter-spacing:0.5px;color:#000;white-space:nowrap">0,00<span style="display:inline-block;width:5px"></span></div><div style="position:absolute;left:306px;top:58px;width:1px;height:19px;background:#b9c5d1"></div><div style="position:absolute;left:306px;top:58px;width:77px;height:18px;text-align:right;padding-right:5px;font:12px 'Liberation Sans', sans-serif;line-height:16px;letter-spacing:0.5px;color:#000;white-space:nowrap">0,00<span style="display:inline-block;width:5px"></span></div><div style="position:absolute;left:383px;top:58px;width:1px;height:19px;background:#b9c5d1"></div><div style="position:absolute;left:0;top:77px;width:424px;height:18px;background:#dfe9f4"></div><div style="position:absolute;left:0;top:95px;width:424px;height:1px;background:#b9c5d1"></div><div style="position:absolute;left:0px;top:77px;width:75px;height:18px;text-align:right;padding-right:6px;font:12px 'Liberation Sans', sans-serif;line-height:16px;letter-spacing:0.5px;color:#000;white-space:nowrap">123.844,0<span style="display:inline-block;width:9px;height:10px;position:relative;letter-spacing:0"><i style="position:absolute;left:0px;top:11px;width:1px;height:1px;background:#000;box-shadow:0 0 0.6px 0.4px rgba(0,0,0,0.55)"></i><i style="position:absolute;left:3px;top:11px;width:1px;height:1px;background:#000;box-shadow:0 0 0.6px 0.4px rgba(0,0,0,0.55)"></i><i style="position:absolute;left:6px;top:11px;width:1px;height:1px;background:#000;box-shadow:0 0 0.6px 0.4px rgba(0,0,0,0.55)"></i></span></div><div style="position:absolute;left:75px;top:77px;width:1px;height:19px;background:#b9c5d1"></div><div style="position:absolute;left:75px;top:77px;width:77px;height:18px;text-align:right;padding-right:5px;font:12px 'Liberation Sans', sans-serif;line-height:16px;letter-spacing:0.5px;color:#000;white-space:nowrap">0,00<span style="display:inline-block;width:5px"></span></div><div style="position:absolute;left:152px;top:77px;width:1px;height:19px;background:#b9c5d1"></div><div style="position:absolute;left:152px;top:77px;width:77px;height:18px;text-align:right;padding-right:5px;font:12px 'Liberation Sans', sans-serif;line-height:16px;letter-spacing:0.5px;color:#000;white-space:nowrap">0,00<span style="display:inline-block;width:5px"></span></div><div style="position:absolute;left:229px;top:77px;width:1px;height:19px;background:#b9c5d1"></div><div style="position:absolute;left:229px;top:77px;width:77px;height:18px;text-align:right;padding-right:5px;font:12px 'Liberation Sans', sans-serif;line-height:16px;letter-spacing:0.5px;color:#000;white-space:nowrap">0,00<span style="display:inline-block;width:5px"></span></div><div style="position:absolute;left:306px;top:77px;width:1px;height:19px;background:#b9c5d1"></div><div style="position:absolute;left:306px;top:77px;width:77px;height:18px;text-align:right;padding-right:5px;font:12px 'Liberation Sans', sans-serif;line-height:16px;letter-spacing:0.5px;color:#000;white-space:nowrap">0,00<span style="display:inline-block;width:5px"></span></div><div style="position:absolute;left:383px;top:77px;width:1px;height:19px;background:#b9c5d1"></div><div style="position:absolute;left:0;top:96px;width:424px;height:18px;background:#dfe9f4"></div><div style="position:absolute;left:0;top:114px;width:424px;height:1px;background:#b9c5d1"></div><div style="position:absolute;left:0px;top:96px;width:75px;height:18px;text-align:right;padding-right:5px;font:12px 'Liberation Sans', sans-serif;line-height:16px;letter-spacing:0.5px;color:#000;white-space:nowrap">2.400,00<span style="display:inline-block;width:5px;text-align:left;letter-spacing:0">-</span></div><div style="position:absolute;left:75px;top:96px;width:1px;height:19px;background:#b9c5d1"></div><div style="position:absolute;left:75px;top:96px;width:77px;height:18px;text-align:right;padding-right:5px;font:12px 'Liberation Sans', sans-serif;line-height:16px;letter-spacing:0.5px;color:#000;white-space:nowrap">0,00<span style="display:inline-block;width:5px"></span></div><div style="position:absolute;left:152px;top:96px;width:1px;height:19px;background:#b9c5d1"></div><div style="position:absolute;left:152px;top:96px;width:77px;height:18px;text-align:right;padding-right:5px;font:12px 'Liberation Sans', sans-serif;line-height:16px;letter-spacing:0.5px;color:#000;white-space:nowrap">0,00<span style="display:inline-block;width:5px"></span></div><div style="position:absolute;left:229px;top:96px;width:1px;height:19px;background:#b9c5d1"></div><div style="position:absolute;left:229px;top:96px;width:77px;height:18px;text-align:right;padding-right:5px;font:12px 'Liberation Sans', sans-serif;line-height:16px;letter-spacing:0.5px;color:#000;white-space:nowrap">12.000,00<span style="display:inline-block;width:5px;text-align:left;letter-spacing:0">-</span></div><div style="position:absolute;left:306px;top:96px;width:1px;height:19px;background:#b9c5d1"></div><div style="position:absolute;left:306px;top:96px;width:77px;height:18px;text-align:right;padding-right:5px;font:12px 'Liberation Sans', sans-serif;line-height:16px;letter-spacing:0.5px;color:#000;white-space:nowrap">18.480,00<span style="display:inline-block;width:5px;text-align:left;letter-spacing:0">-</span></div><div style="position:absolute;left:383px;top:96px;width:1px;height:19px;background:#b9c5d1"></div><div style="position:absolute;left:0;top:115px;width:424px;height:18px;background:#dfe9f4"></div><div style="position:absolute;left:0;top:133px;width:424px;height:1px;background:#b9c5d1"></div><div style="position:absolute;left:0px;top:115px;width:75px;height:18px;text-align:right;padding-right:5px;font:12px 'Liberation Sans', sans-serif;line-height:16px;letter-spacing:0.5px;color:#000;white-space:nowrap">13.738,34<span style="display:inline-block;width:5px;text-align:left;letter-spacing:0">-</span></div><div style="position:absolute;left:75px;top:115px;width:1px;height:19px;background:#b9c5d1"></div><div style="position:absolute;left:75px;top:115px;width:77px;height:18px;text-align:right;padding-right:5px;font:12px 'Liberation Sans', sans-serif;line-height:16px;letter-spacing:0.5px;color:#000;white-space:nowrap">0,00<span style="display:inline-block;width:5px"></span></div><div style="position:absolute;left:152px;top:115px;width:1px;height:19px;background:#b9c5d1"></div><div style="position:absolute;left:152px;top:115px;width:77px;height:18px;text-align:right;padding-right:5px;font:12px 'Liberation Sans', sans-serif;line-height:16px;letter-spacing:0.5px;color:#000;white-space:nowrap">0,00<span style="display:inline-block;width:5px"></span></div><div style="position:absolute;left:229px;top:115px;width:1px;height:19px;background:#b9c5d1"></div><div style="position:absolute;left:229px;top:115px;width:77px;height:18px;text-align:right;padding-right:5px;font:12px 'Liberation Sans', sans-serif;line-height:16px;letter-spacing:0.5px;color:#000;white-space:nowrap">0,00<span style="display:inline-block;width:5px"></span></div><div style="position:absolute;left:306px;top:115px;width:1px;height:19px;background:#b9c5d1"></div><div style="position:absolute;left:306px;top:115px;width:77px;height:18px;text-align:right;padding-right:5px;font:12px 'Liberation Sans', sans-serif;line-height:16px;letter-spacing:0.5px;color:#000;white-space:nowrap">0,00<span style="display:inline-block;width:5px"></span></div><div style="position:absolute;left:383px;top:115px;width:1px;height:19px;background:#b9c5d1"></div><div style="position:absolute;left:0;top:134px;width:424px;height:18px;background:#dfe9f4"></div><div style="position:absolute;left:0;top:152px;width:424px;height:1px;background:#b9c5d1"></div><div style="position:absolute;left:0px;top:134px;width:75px;height:18px;text-align:right;padding-right:5px;font:12px 'Liberation Sans', sans-serif;line-height:16px;letter-spacing:0.5px;color:#000;white-space:nowrap">0,00<span style="display:inline-block;width:5px"></span></div><div style="position:absolute;left:75px;top:134px;width:1px;height:19px;background:#b9c5d1"></div><div style="position:absolute;left:75px;top:134px;width:77px;height:18px;text-align:right;padding-right:5px;font:12px 'Liberation Sans', sans-serif;line-height:16px;letter-spacing:0.5px;color:#000;white-space:nowrap">0,00<span style="display:inline-block;width:5px"></span></div><div style="position:absolute;left:152px;top:134px;width:1px;height:19px;background:#b9c5d1"></div><div style="position:absolute;left:152px;top:134px;width:77px;height:18px;text-align:right;padding-right:5px;font:12px 'Liberation Sans', sans-serif;line-height:16px;letter-spacing:0.5px;color:#000;white-space:nowrap">0,00<span style="display:inline-block;width:5px"></span></div><div style="position:absolute;left:229px;top:134px;width:1px;height:19px;background:#b9c5d1"></div><div style="position:absolute;left:229px;top:134px;width:77px;height:18px;text-align:right;padding-right:5px;font:12px 'Liberation Sans', sans-serif;line-height:16px;letter-spacing:0.5px;color:#000;white-space:nowrap">0,00<span style="display:inline-block;width:5px"></span></div><div style="position:absolute;left:306px;top:134px;width:1px;height:19px;background:#b9c5d1"></div><div style="position:absolute;left:306px;top:134px;width:77px;height:18px;text-align:right;padding-right:5px;font:12px 'Liberation Sans', sans-serif;line-height:16px;letter-spacing:0.5px;color:#000;white-space:nowrap">0,00<span style="display:inline-block;width:5px"></span></div><div style="position:absolute;left:383px;top:134px;width:1px;height:19px;background:#b9c5d1"></div><div style="position:absolute;left:0;top:153px;width:424px;height:18px;background:#dfe9f4"></div><div style="position:absolute;left:0;top:171px;width:424px;height:1px;background:#b9c5d1"></div><div style="position:absolute;left:0px;top:153px;width:75px;height:18px;text-align:right;padding-right:5px;font:12px 'Liberation Sans', sans-serif;line-height:16px;letter-spacing:0.5px;color:#000;white-space:nowrap">0,00<span style="display:inline-block;width:5px"></span></div><div style="position:absolute;left:75px;top:153px;width:1px;height:19px;background:#b9c5d1"></div><div style="position:absolute;left:75px;top:153px;width:77px;height:18px;text-align:right;padding-right:5px;font:12px 'Liberation Sans', sans-serif;line-height:16px;letter-spacing:0.5px;color:#000;white-space:nowrap">0,00<span style="display:inline-block;width:5px"></span></div><div style="position:absolute;left:152px;top:153px;width:1px;height:19px;background:#b9c5d1"></div><div style="position:absolute;left:152px;top:153px;width:77px;height:18px;text-align:right;padding-right:5px;font:12px 'Liberation Sans', sans-serif;line-height:16px;letter-spacing:0.5px;color:#000;white-space:nowrap">0,00<span style="display:inline-block;width:5px"></span></div><div style="position:absolute;left:229px;top:153px;width:1px;height:19px;background:#b9c5d1"></div><div style="position:absolute;left:229px;top:153px;width:77px;height:18px;text-align:right;padding-right:5px;font:12px 'Liberation Sans', sans-serif;line-height:16px;letter-spacing:0.5px;color:#000;white-space:nowrap">0,00<span style="display:inline-block;width:5px"></span></div><div style="position:absolute;left:306px;top:153px;width:1px;height:19px;background:#b9c5d1"></div><div style="position:absolute;left:306px;top:153px;width:77px;height:18px;text-align:right;padding-right:5px;font:12px 'Liberation Sans', sans-serif;line-height:16px;letter-spacing:0.5px;color:#000;white-space:nowrap">0,00<span style="display:inline-block;width:5px"></span></div><div style="position:absolute;left:383px;top:153px;width:1px;height:19px;background:#b9c5d1"></div><div style="position:absolute;left:0;top:172px;width:424px;height:18px;background:#dfe9f4"></div><div style="position:absolute;left:0;top:190px;width:424px;height:1px;background:#b9c5d1"></div><div style="position:absolute;left:0px;top:172px;width:75px;height:18px;text-align:right;padding-right:5px;font:12px 'Liberation Sans', sans-serif;line-height:16px;letter-spacing:0.5px;color:#000;white-space:nowrap">0,00<span style="display:inline-block;width:5px"></span></div><div style="position:absolute;left:75px;top:172px;width:1px;height:19px;background:#b9c5d1"></div><div style="position:absolute;left:75px;top:172px;width:77px;height:18px;text-align:right;padding-right:5px;font:12px 'Liberation Sans', sans-serif;line-height:16px;letter-spacing:0.5px;color:#000;white-space:nowrap">0,00<span style="display:inline-block;width:5px"></span></div><div style="position:absolute;left:152px;top:172px;width:1px;height:19px;background:#b9c5d1"></div><div style="position:absolute;left:152px;top:172px;width:77px;height:18px;text-align:right;padding-right:5px;font:12px 'Liberation Sans', sans-serif;line-height:16px;letter-spacing:0.5px;color:#000;white-space:nowrap">0,00<span style="display:inline-block;width:5px"></span></div><div style="position:absolute;left:229px;top:172px;width:1px;height:19px;background:#b9c5d1"></div><div style="position:absolute;left:229px;top:172px;width:77px;height:18px;text-align:right;padding-right:5px;font:12px 'Liberation Sans', sans-serif;line-height:16px;letter-spacing:0.5px;color:#000;white-space:nowrap">0,00<span style="display:inline-block;width:5px"></span></div><div style="position:absolute;left:306px;top:172px;width:1px;height:19px;background:#b9c5d1"></div><div style="position:absolute;left:306px;top:172px;width:77px;height:18px;text-align:right;padding-right:5px;font:12px 'Liberation Sans', sans-serif;line-height:16px;letter-spacing:0.5px;color:#000;white-space:nowrap">0,00<span style="display:inline-block;width:5px"></span></div><div style="position:absolute;left:383px;top:172px;width:1px;height:19px;background:#b9c5d1"></div><div style="position:absolute;left:0;top:191px;width:424px;height:18px;background:#dfe9f4"></div><div style="position:absolute;left:0;top:209px;width:424px;height:1px;background:#b9c5d1"></div><div style="position:absolute;left:0px;top:191px;width:75px;height:18px;text-align:right;padding-right:5px;font:12px 'Liberation Sans', sans-serif;line-height:16px;letter-spacing:0.5px;color:#000;white-space:nowrap">0,00<span style="display:inline-block;width:5px"></span></div><div style="position:absolute;left:75px;top:191px;width:1px;height:19px;background:#b9c5d1"></div><div style="position:absolute;left:75px;top:191px;width:77px;height:18px;text-align:right;padding-right:5px;font:12px 'Liberation Sans', sans-serif;line-height:16px;letter-spacing:0.5px;color:#000;white-space:nowrap">0,00<span style="display:inline-block;width:5px"></span></div><div style="position:absolute;left:152px;top:191px;width:1px;height:19px;background:#b9c5d1"></div><div style="position:absolute;left:152px;top:191px;width:77px;height:18px;text-align:right;padding-right:5px;font:12px 'Liberation Sans', sans-serif;line-height:16px;letter-spacing:0.5px;color:#000;white-space:nowrap">0,00<span style="display:inline-block;width:5px"></span></div><div style="position:absolute;left:229px;top:191px;width:1px;height:19px;background:#b9c5d1"></div><div style="position:absolute;left:229px;top:191px;width:77px;height:18px;text-align:right;padding-right:5px;font:12px 'Liberation Sans', sans-serif;line-height:16px;letter-spacing:0.5px;color:#000;white-space:nowrap">0,00<span style="display:inline-block;width:5px"></span></div><div style="position:absolute;left:306px;top:191px;width:1px;height:19px;background:#b9c5d1"></div><div style="position:absolute;left:306px;top:191px;width:77px;height:18px;text-align:right;padding-right:5px;font:12px 'Liberation Sans', sans-serif;line-height:16px;letter-spacing:0.5px;color:#000;white-space:nowrap">0,00<span style="display:inline-block;width:5px"></span></div><div style="position:absolute;left:383px;top:191px;width:1px;height:19px;background:#b9c5d1"></div></div>
<div style="position:absolute;left:923px;top:298px;width:424px;height:1px;background:#c3d0dc"></div>
<div style="position:absolute;left:437px;top:121px;width:17px;height:177px;background:#f7f9fb"></div>
<div style="position:absolute;left:437px;top:121px;width:17px;height:17px;background:#f1f4f8;border:1px solid #e4eaf0"><div style="position:absolute;left:3.0px;top:4.5px;width:0;height:0;border-left:4.5px solid transparent;border-right:4.5px solid transparent;border-bottom:5px solid #4a5a68"></div></div>
<div style="position:absolute;left:437px;top:139px;width:17px;height:17px;background:#f1f4f8;border:1px solid #e4eaf0"><div style="position:absolute;left:3.0px;top:4.5px;width:0;height:0;border-left:4.5px solid transparent;border-right:4.5px solid transparent;border-top:5px solid #4a5a68"></div></div>
<div style="position:absolute;left:439px;top:162px;width:13px;height:5px;background:linear-gradient(#fbfcfd,#e8eef3);border:1px solid #9eacb9;border-radius:1px;box-shadow:0 1px 1px #c8d0d8"></div>
<div style="position:absolute;left:437px;top:263px;width:17px;height:17px;background:#f1f4f8;border:1px solid #e4eaf0"><div style="position:absolute;left:3.0px;top:4.5px;width:0;height:0;border-left:4.5px solid transparent;border-right:4.5px solid transparent;border-bottom:5px solid #4a5a68"></div></div>
<div style="position:absolute;left:437px;top:281px;width:17px;height:17px;background:#f1f4f8;border:1px solid #e4eaf0"><div style="position:absolute;left:3.0px;top:4.5px;width:0;height:0;border-left:4.5px solid transparent;border-right:4.5px solid transparent;border-top:5px solid #4a5a68"></div></div>
<div style="position:absolute;left:894px;top:121px;width:17px;height:177px;background:#f7f9fb"></div>
<div style="position:absolute;left:894px;top:121px;width:17px;height:17px;background:#f1f4f8;border:1px solid #e4eaf0"><div style="position:absolute;left:3.0px;top:4.5px;width:0;height:0;border-left:4.5px solid transparent;border-right:4.5px solid transparent;border-bottom:5px solid #4a5a68"></div></div>
<div style="position:absolute;left:894px;top:139px;width:17px;height:17px;background:#f1f4f8;border:1px solid #e4eaf0"><div style="position:absolute;left:3.0px;top:4.5px;width:0;height:0;border-left:4.5px solid transparent;border-right:4.5px solid transparent;border-top:5px solid #4a5a68"></div></div>
<div style="position:absolute;left:896px;top:162px;width:13px;height:5px;background:linear-gradient(#fbfcfd,#e8eef3);border:1px solid #9eacb9;border-radius:1px;box-shadow:0 1px 1px #c8d0d8"></div>
<div style="position:absolute;left:894px;top:263px;width:17px;height:17px;background:#f1f4f8;border:1px solid #e4eaf0"><div style="position:absolute;left:3.0px;top:4.5px;width:0;height:0;border-left:4.5px solid transparent;border-right:4.5px solid transparent;border-bottom:5px solid #4a5a68"></div></div>
<div style="position:absolute;left:894px;top:281px;width:17px;height:17px;background:#f1f4f8;border:1px solid #e4eaf0"><div style="position:absolute;left:3.0px;top:4.5px;width:0;height:0;border-left:4.5px solid transparent;border-right:4.5px solid transparent;border-top:5px solid #4a5a68"></div></div>
<div style="position:absolute;left:1350px;top:121px;width:17px;height:177px;background:#f7f9fb"></div>
<div style="position:absolute;left:1350px;top:121px;width:17px;height:17px;background:#f1f4f8;border:1px solid #e4eaf0"><div style="position:absolute;left:3.0px;top:4.5px;width:0;height:0;border-left:4.5px solid transparent;border-right:4.5px solid transparent;border-bottom:5px solid #4a5a68"></div></div>
<div style="position:absolute;left:1350px;top:139px;width:17px;height:17px;background:#f1f4f8;border:1px solid #e4eaf0"><div style="position:absolute;left:3.0px;top:4.5px;width:0;height:0;border-left:4.5px solid transparent;border-right:4.5px solid transparent;border-top:5px solid #4a5a68"></div></div>
<div style="position:absolute;left:1352px;top:162px;width:13px;height:5px;background:linear-gradient(#fbfcfd,#e8eef3);border:1px solid #9eacb9;border-radius:1px;box-shadow:0 1px 1px #c8d0d8"></div>
<div style="position:absolute;left:1350px;top:263px;width:17px;height:17px;background:#f1f4f8;border:1px solid #e4eaf0"><div style="position:absolute;left:3.0px;top:4.5px;width:0;height:0;border-left:4.5px solid transparent;border-right:4.5px solid transparent;border-bottom:5px solid #4a5a68"></div></div>
<div style="position:absolute;left:1350px;top:281px;width:17px;height:17px;background:#f1f4f8;border:1px solid #e4eaf0"><div style="position:absolute;left:3.0px;top:4.5px;width:0;height:0;border-left:4.5px solid transparent;border-right:4.5px solid transparent;border-top:5px solid #4a5a68"></div></div>
<div style="position:absolute;left:8px;top:301px;width:17px;height:17px;background:#f1f4f8;border:1px solid #e4eaf0"><div style="position:absolute;left:5.0px;top:3.0px;width:0;height:0;border-top:4.5px solid transparent;border-bottom:4.5px solid transparent;border-right:5px solid #4a5a68"></div></div>
<div style="position:absolute;left:26px;top:301px;width:17px;height:17px;background:#f1f4f8;border:1px solid #e4eaf0"><div style="position:absolute;left:5.5px;top:3.0px;width:0;height:0;border-top:4.5px solid transparent;border-bottom:4.5px solid transparent;border-left:5px solid #4a5a68"></div></div>
<div style="position:absolute;left:43px;top:301px;width:355px;height:17px;background:#fbfcfd"></div>
<div style="position:absolute;left:46px;top:302px;width:247px;height:15px;background:linear-gradient(#f4f7fa,#e3eaf1 60%,#d8e1ea);border:1px solid #9eabb8;border-radius:2px"></div>
<div style="position:absolute;left:166px;top:307px;width:2px;height:2px;background:linear-gradient(135deg,#ffffff 0 35%,#b4c0cc 35% 65%,#7f8e9c 65%)"></div>
<div style="position:absolute;left:166px;top:311px;width:2px;height:2px;background:linear-gradient(135deg,#ffffff 0 35%,#b4c0cc 35% 65%,#7f8e9c 65%)"></div>
<div style="position:absolute;left:169px;top:307px;width:2px;height:2px;background:linear-gradient(135deg,#ffffff 0 35%,#b4c0cc 35% 65%,#7f8e9c 65%)"></div>
<div style="position:absolute;left:169px;top:311px;width:2px;height:2px;background:linear-gradient(135deg,#ffffff 0 35%,#b4c0cc 35% 65%,#7f8e9c 65%)"></div>
<div style="position:absolute;left:172px;top:307px;width:2px;height:2px;background:linear-gradient(135deg,#ffffff 0 35%,#b4c0cc 35% 65%,#7f8e9c 65%)"></div>
<div style="position:absolute;left:172px;top:311px;width:2px;height:2px;background:linear-gradient(135deg,#ffffff 0 35%,#b4c0cc 35% 65%,#7f8e9c 65%)"></div>
<div style="position:absolute;left:398px;top:301px;width:17px;height:17px;background:#f1f4f8;border:1px solid #e4eaf0"><div style="position:absolute;left:5.0px;top:3.0px;width:0;height:0;border-top:4.5px solid transparent;border-bottom:4.5px solid transparent;border-right:5px solid #4a5a68"></div></div>
<div style="position:absolute;left:416px;top:301px;width:17px;height:17px;background:#f1f4f8;border:1px solid #e4eaf0"><div style="position:absolute;left:5.5px;top:3.0px;width:0;height:0;border-top:4.5px solid transparent;border-bottom:4.5px solid transparent;border-left:5px solid #4a5a68"></div></div>
<div style="position:absolute;left:465px;top:301px;width:17px;height:17px;background:#f1f4f8;border:1px solid #e4eaf0"><div style="position:absolute;left:5.0px;top:3.0px;width:0;height:0;border-top:4.5px solid transparent;border-bottom:4.5px solid transparent;border-right:5px solid #4a5a68"></div></div>
<div style="position:absolute;left:483px;top:301px;width:17px;height:17px;background:#f1f4f8;border:1px solid #e4eaf0"><div style="position:absolute;left:5.5px;top:3.0px;width:0;height:0;border-top:4.5px solid transparent;border-bottom:4.5px solid transparent;border-left:5px solid #4a5a68"></div></div>
<div style="position:absolute;left:500px;top:301px;width:354px;height:17px;background:#fbfcfd"></div>
<div style="position:absolute;left:553px;top:302px;width:247px;height:15px;background:linear-gradient(#f4f7fa,#e3eaf1 60%,#d8e1ea);border:1px solid #9eabb8;border-radius:2px"></div>
<div style="position:absolute;left:673px;top:307px;width:2px;height:2px;background:linear-gradient(135deg,#ffffff 0 35%,#b4c0cc 35% 65%,#7f8e9c 65%)"></div>
<div style="position:absolute;left:673px;top:311px;width:2px;height:2px;background:linear-gradient(135deg,#ffffff 0 35%,#b4c0cc 35% 65%,#7f8e9c 65%)"></div>
<div style="position:absolute;left:676px;top:307px;width:2px;height:2px;background:linear-gradient(135deg,#ffffff 0 35%,#b4c0cc 35% 65%,#7f8e9c 65%)"></div>
<div style="position:absolute;left:676px;top:311px;width:2px;height:2px;background:linear-gradient(135deg,#ffffff 0 35%,#b4c0cc 35% 65%,#7f8e9c 65%)"></div>
<div style="position:absolute;left:679px;top:307px;width:2px;height:2px;background:linear-gradient(135deg,#ffffff 0 35%,#b4c0cc 35% 65%,#7f8e9c 65%)"></div>
<div style="position:absolute;left:679px;top:311px;width:2px;height:2px;background:linear-gradient(135deg,#ffffff 0 35%,#b4c0cc 35% 65%,#7f8e9c 65%)"></div>
<div style="position:absolute;left:854px;top:301px;width:17px;height:17px;background:#f1f4f8;border:1px solid #e4eaf0"><div style="position:absolute;left:5.0px;top:3.0px;width:0;height:0;border-top:4.5px solid transparent;border-bottom:4.5px solid transparent;border-right:5px solid #4a5a68"></div></div>
<div style="position:absolute;left:872px;top:301px;width:17px;height:17px;background:#f1f4f8;border:1px solid #e4eaf0"><div style="position:absolute;left:5.5px;top:3.0px;width:0;height:0;border-top:4.5px solid transparent;border-bottom:4.5px solid transparent;border-left:5px solid #4a5a68"></div></div>
<div style="position:absolute;left:922px;top:301px;width:17px;height:17px;background:#f1f4f8;border:1px solid #e4eaf0"><div style="position:absolute;left:5.0px;top:3.0px;width:0;height:0;border-top:4.5px solid transparent;border-bottom:4.5px solid transparent;border-right:5px solid #4a5a68"></div></div>
<div style="position:absolute;left:940px;top:301px;width:17px;height:17px;background:#f1f4f8;border:1px solid #e4eaf0"><div style="position:absolute;left:5.5px;top:3.0px;width:0;height:0;border-top:4.5px solid transparent;border-bottom:4.5px solid transparent;border-left:5px solid #4a5a68"></div></div>
<div style="position:absolute;left:957px;top:301px;width:354px;height:17px;background:#fbfcfd"></div>
<div style="position:absolute;left:1010px;top:302px;width:246px;height:15px;background:linear-gradient(#f4f7fa,#e3eaf1 60%,#d8e1ea);border:1px solid #9eabb8;border-radius:2px"></div>
<div style="position:absolute;left:1130px;top:307px;width:2px;height:2px;background:linear-gradient(135deg,#ffffff 0 35%,#b4c0cc 35% 65%,#7f8e9c 65%)"></div>
<div style="position:absolute;left:1130px;top:311px;width:2px;height:2px;background:linear-gradient(135deg,#ffffff 0 35%,#b4c0cc 35% 65%,#7f8e9c 65%)"></div>
<div style="position:absolute;left:1133px;top:307px;width:2px;height:2px;background:linear-gradient(135deg,#ffffff 0 35%,#b4c0cc 35% 65%,#7f8e9c 65%)"></div>
<div style="position:absolute;left:1133px;top:311px;width:2px;height:2px;background:linear-gradient(135deg,#ffffff 0 35%,#b4c0cc 35% 65%,#7f8e9c 65%)"></div>
<div style="position:absolute;left:1136px;top:307px;width:2px;height:2px;background:linear-gradient(135deg,#ffffff 0 35%,#b4c0cc 35% 65%,#7f8e9c 65%)"></div>
<div style="position:absolute;left:1136px;top:311px;width:2px;height:2px;background:linear-gradient(135deg,#ffffff 0 35%,#b4c0cc 35% 65%,#7f8e9c 65%)"></div>
<div style="position:absolute;left:1311px;top:301px;width:17px;height:17px;background:#f1f4f8;border:1px solid #e4eaf0"><div style="position:absolute;left:5.0px;top:3.0px;width:0;height:0;border-top:4.5px solid transparent;border-bottom:4.5px solid transparent;border-right:5px solid #4a5a68"></div></div>
<div style="position:absolute;left:1329px;top:301px;width:17px;height:17px;background:#f1f4f8;border:1px solid #e4eaf0"><div style="position:absolute;left:5.5px;top:3.0px;width:0;height:0;border-top:4.5px solid transparent;border-bottom:4.5px solid transparent;border-left:5px solid #4a5a68"></div></div>
<svg width="1399" height="688" style="position:absolute;left:0;top:0"><line x1="73" x2="1368" y1="569.5" y2="569.5" stroke="#c9d9ea" stroke-width="1"/><line x1="73" x2="1368" y1="562.5" y2="562.5" stroke="#d5e2ef" stroke-width="1"/><line x1="73" x2="1368" y1="555.5" y2="555.5" stroke="#d5e2ef" stroke-width="1"/><line x1="73" x2="1368" y1="549.5" y2="549.5" stroke="#d5e2ef" stroke-width="1"/><line x1="73" x2="1368" y1="542.5" y2="542.5" stroke="#d5e2ef" stroke-width="1"/><line x1="73" x2="1368" y1="536.5" y2="536.5" stroke="#c9d9ea" stroke-width="1"/><line x1="73" x2="1368" y1="529.5" y2="529.5" stroke="#d5e2ef" stroke-width="1"/><line x1="73" x2="1368" y1="523.5" y2="523.5" stroke="#d5e2ef" stroke-width="1"/><line x1="73" x2="1368" y1="516.5" y2="516.5" stroke="#d5e2ef" stroke-width="1"/><line x1="73" x2="1368" y1="510.5" y2="510.5" stroke="#d5e2ef" stroke-width="1"/><line x1="73" x2="1368" y1="503.5" y2="503.5" stroke="#c9d9ea" stroke-width="1"/><line x1="73" x2="1368" y1="497.5" y2="497.5" stroke="#d5e2ef" stroke-width="1"/><line x1="73" x2="1368" y1="490.5" y2="490.5" stroke="#d5e2ef" stroke-width="1"/><line x1="73" x2="1368" y1="483.5" y2="483.5" stroke="#d5e2ef" stroke-width="1"/><line x1="73" x2="1368" y1="477.5" y2="477.5" stroke="#d5e2ef" stroke-width="1"/><line x1="73" x2="1368" y1="470.5" y2="470.5" stroke="#c9d9ea" stroke-width="1"/><line x1="73" x2="1368" y1="464.5" y2="464.5" stroke="#d5e2ef" stroke-width="1"/><line x1="73" x2="1368" y1="457.5" y2="457.5" stroke="#d5e2ef" stroke-width="1"/><line x1="73" x2="1368" y1="451.5" y2="451.5" stroke="#d5e2ef" stroke-width="1"/><line x1="73" x2="1368" y1="444.5" y2="444.5" stroke="#d5e2ef" stroke-width="1"/><line x1="73" x2="1368" y1="438.5" y2="438.5" stroke="#c9d9ea" stroke-width="1"/><line x1="73" x2="1368" y1="431.5" y2="431.5" stroke="#d5e2ef" stroke-width="1"/><line x1="73" x2="1368" y1="425.5" y2="425.5" stroke="#d5e2ef" stroke-width="1"/><line x1="73" x2="1368" y1="418.5" y2="418.5" stroke="#d5e2ef" stroke-width="1"/><line x1="73" x2="1368" y1="411.5" y2="411.5" stroke="#d5e2ef" stroke-width="1"/><line x1="73" x2="1368" y1="405.5" y2="405.5" stroke="#c9d9ea" stroke-width="1"/><line x1="73" x2="1368" y1="398.5" y2="398.5" stroke="#d5e2ef" stroke-width="1"/><line x1="73" x2="1368" y1="392.5" y2="392.5" stroke="#d5e2ef" stroke-width="1"/><line x1="73" x2="1368" y1="385.5" y2="385.5" stroke="#d5e2ef" stroke-width="1"/><line x1="73" x2="1368" y1="379.5" y2="379.5" stroke="#d5e2ef" stroke-width="1"/><line x1="73" x2="1368" y1="372.5" y2="372.5" stroke="#c9d9ea" stroke-width="1"/><line x1="73" x2="1368" y1="366.5" y2="366.5" stroke="#d5e2ef" stroke-width="1"/><line x1="73" x2="1368" y1="359.5" y2="359.5" stroke="#d5e2ef" stroke-width="1"/><line x1="73" x2="1368" y1="353.5" y2="353.5" stroke="#d5e2ef" stroke-width="1"/><line x1="73" x2="1368" y1="346.5" y2="346.5" stroke="#d5e2ef" stroke-width="1"/><line x1="73" x2="1368" y1="340.5" y2="340.5" stroke="#c9d9ea" stroke-width="1"/><line x1="288.5" x2="288.5" y1="340" y2="569" stroke="#cddbea" stroke-width="1"/><line x1="504.5" x2="504.5" y1="340" y2="569" stroke="#cddbea" stroke-width="1"/><line x1="720.5" x2="720.5" y1="340" y2="569" stroke="#cddbea" stroke-width="1"/><line x1="936.5" x2="936.5" y1="340" y2="569" stroke="#cddbea" stroke-width="1"/><line x1="1152.5" x2="1152.5" y1="340" y2="569" stroke="#cddbea" stroke-width="1"/><line x1="1368.5" x2="1368.5" y1="340" y2="569" stroke="#d0deec" stroke-width="1"/><path d="M180.5 569 L180.5 358.5 L396.8 358.5 L612.6 358.5 L828.5 358.5 L1044.5 479.5 L1260.5 479.5 L1260.5 569 Z" fill="#fee16e" stroke="#d8bd4c" stroke-width="1"/><rect x="94.5" y="360.5" width="86" height="209" fill="#c5dd83" stroke="#9fb85c" stroke-width="1"/><rect x="180.5" y="553.5" width="86" height="16" fill="#7fa8dd" stroke="#5a82b8" stroke-width="1"/><rect x="741.5" y="490.5" width="87" height="79" fill="#c5dd83" stroke="#9fb85c" stroke-width="1"/><rect x="828.5" y="490.5" width="86" height="79" fill="#7fa8dd" stroke="#5a82b8" stroke-width="1"/><rect x="1043.5" y="448.5" width="87" height="121" fill="#7fa8dd" stroke="#5a82b8" stroke-width="1"/><line x1="74" x2="74" y1="339" y2="570" stroke="#b6c8da" stroke-width="2"/><line x1="69" x2="1369" y1="569" y2="569" stroke="#b6c8da" stroke-width="2"/><rect x="68" y="568" width="5" height="2" fill="#b6c8da"/><rect x="70" y="562" width="3" height="1" fill="#b6c8da"/><rect x="70" y="555" width="3" height="1" fill="#b6c8da"/><rect x="70" y="549" width="3" height="1" fill="#b6c8da"/><rect x="70" y="542" width="3" height="1" fill="#b6c8da"/><rect x="68" y="535" width="5" height="2" fill="#b6c8da"/><rect x="70" y="529" width="3" height="1" fill="#b6c8da"/><rect x="70" y="523" width="3" height="1" fill="#b6c8da"/><rect x="70" y="516" width="3" height="1" fill="#b6c8da"/><rect x="70" y="510" width="3" height="1" fill="#b6c8da"/><rect x="68" y="502" width="5" height="2" fill="#b6c8da"/><rect x="70" y="497" width="3" height="1" fill="#b6c8da"/><rect x="70" y="490" width="3" height="1" fill="#b6c8da"/><rect x="70" y="483" width="3" height="1" fill="#b6c8da"/><rect x="70" y="477" width="3" height="1" fill="#b6c8da"/><rect x="68" y="469" width="5" height="2" fill="#b6c8da"/><rect x="70" y="464" width="3" height="1" fill="#b6c8da"/><rect x="70" y="457" width="3" height="1" fill="#b6c8da"/><rect x="70" y="451" width="3" height="1" fill="#b6c8da"/><rect x="70" y="444" width="3" height="1" fill="#b6c8da"/><rect x="68" y="437" width="5" height="2" fill="#b6c8da"/><rect x="70" y="431" width="3" height="1" fill="#b6c8da"/><rect x="70" y="425" width="3" height="1" fill="#b6c8da"/><rect x="70" y="418" width="3" height="1" fill="#b6c8da"/><rect x="70" y="411" width="3" height="1" fill="#b6c8da"/><rect x="68" y="404" width="5" height="2" fill="#b6c8da"/><rect x="70" y="398" width="3" height="1" fill="#b6c8da"/><rect x="70" y="392" width="3" height="1" fill="#b6c8da"/><rect x="70" y="385" width="3" height="1" fill="#b6c8da"/><rect x="70" y="379" width="3" height="1" fill="#b6c8da"/><rect x="68" y="371" width="5" height="2" fill="#b6c8da"/><rect x="70" y="366" width="3" height="1" fill="#b6c8da"/><rect x="70" y="359" width="3" height="1" fill="#b6c8da"/><rect x="70" y="353" width="3" height="1" fill="#b6c8da"/><rect x="70" y="346" width="3" height="1" fill="#b6c8da"/><rect x="68" y="339" width="5" height="2" fill="#b6c8da"/><rect x="72" y="569" width="2" height="6" fill="#b6c8da"/><rect x="287" y="569" width="2" height="6" fill="#b6c8da"/><rect x="503" y="569" width="2" height="6" fill="#b6c8da"/><rect x="719" y="569" width="2" height="6" fill="#b6c8da"/><rect x="935" y="569" width="2" height="6" fill="#b6c8da"/><rect x="1151" y="569" width="2" height="6" fill="#b6c8da"/><rect x="1367" y="569" width="2" height="6" fill="#b6c8da"/></svg>
<div style="position:absolute;left:0px;width:65px;top:563px;text-align:right;font:12px 'Liberation Sans', sans-serif;letter-spacing:0.35px;color:#000">0</div>
<div style="position:absolute;left:0px;width:65px;top:530px;text-align:right;font:12px 'Liberation Sans', sans-serif;letter-spacing:0.35px;color:#000">5000</div>
<div style="position:absolute;left:0px;width:65px;top:498px;text-align:right;font:12px 'Liberation Sans', sans-serif;letter-spacing:0.35px;color:#000">10000</div>
<div style="position:absolute;left:0px;width:65px;top:465px;text-align:right;font:12px 'Liberation Sans', sans-serif;letter-spacing:0.35px;color:#000">15000</div>
<div style="position:absolute;left:0px;width:65px;top:432px;text-align:right;font:12px 'Liberation Sans', sans-serif;letter-spacing:0.35px;color:#000">20000</div>
<div style="position:absolute;left:0px;width:65px;top:399px;text-align:right;font:12px 'Liberation Sans', sans-serif;letter-spacing:0.35px;color:#000">25000</div>
<div style="position:absolute;left:0px;width:65px;top:367px;text-align:right;font:12px 'Liberation Sans', sans-serif;letter-spacing:0.35px;color:#000">30000</div>
<div style="position:absolute;left:0px;width:65px;top:334px;text-align:right;font:12px 'Liberation Sans', sans-serif;letter-spacing:0.35px;color:#000">35000</div>
<div style="position:absolute;left:130px;width:100px;top:575px;text-align:center;font:12px 'Liberation Sans', sans-serif;letter-spacing:0.35px;color:#000">201204</div>
<div style="position:absolute;left:346px;width:100px;top:575px;text-align:center;font:12px 'Liberation Sans', sans-serif;letter-spacing:0.35px;color:#000">201205</div>
<div style="position:absolute;left:562px;width:100px;top:575px;text-align:center;font:12px 'Liberation Sans', sans-serif;letter-spacing:0.35px;color:#000">201206</div>
<div style="position:absolute;left:777px;width:100px;top:575px;text-align:center;font:12px 'Liberation Sans', sans-serif;letter-spacing:0.35px;color:#000">201207</div>
<div style="position:absolute;left:993px;width:100px;top:575px;text-align:center;font:12px 'Liberation Sans', sans-serif;letter-spacing:0.35px;color:#000">201208</div>
<div style="position:absolute;left:1209px;width:100px;top:575px;text-align:center;font:12px 'Liberation Sans', sans-serif;letter-spacing:0.35px;color:#000">201209</div>
<div style="position:absolute;left:670px;width:100px;top:594px;text-align:center;font:11px 'Liberation Sans', sans-serif;color:#000">Perioden</div>
<div style="position:absolute;left:12px;top:467px;font:12px 'Liberation Sans', sans-serif;color:#000;transform:rotate(-90deg);transform-origin:0 0">Wert</div>
<div style="position:absolute;left:621px;top:619px;width:11px;height:11px;background:#c5dd83;border:1px solid #9fb85c"></div>
<div style="position:absolute;left:634px;top:618px;font:12px 'Liberation Sans', sans-serif;letter-spacing:0.2px;color:#000;white-space:nowrap">Zugänge</div>
<div style="position:absolute;left:690px;top:619px;width:11px;height:11px;background:#7fa8dd;border:1px solid #5a82b8"></div>
<div style="position:absolute;left:703px;top:618px;font:12px 'Liberation Sans', sans-serif;letter-spacing:0.2px;color:#000;white-space:nowrap">Abgänge</div>
<div style="position:absolute;left:759px;top:619px;width:11px;height:11px;background:#fee16e;border:1px solid #d8bd4c"></div>
<div style="position:absolute;left:772px;top:618px;font:12px 'Liberation Sans', sans-serif;letter-spacing:0.2px;color:#000;white-space:nowrap">Bestand</div>
</body></html>
